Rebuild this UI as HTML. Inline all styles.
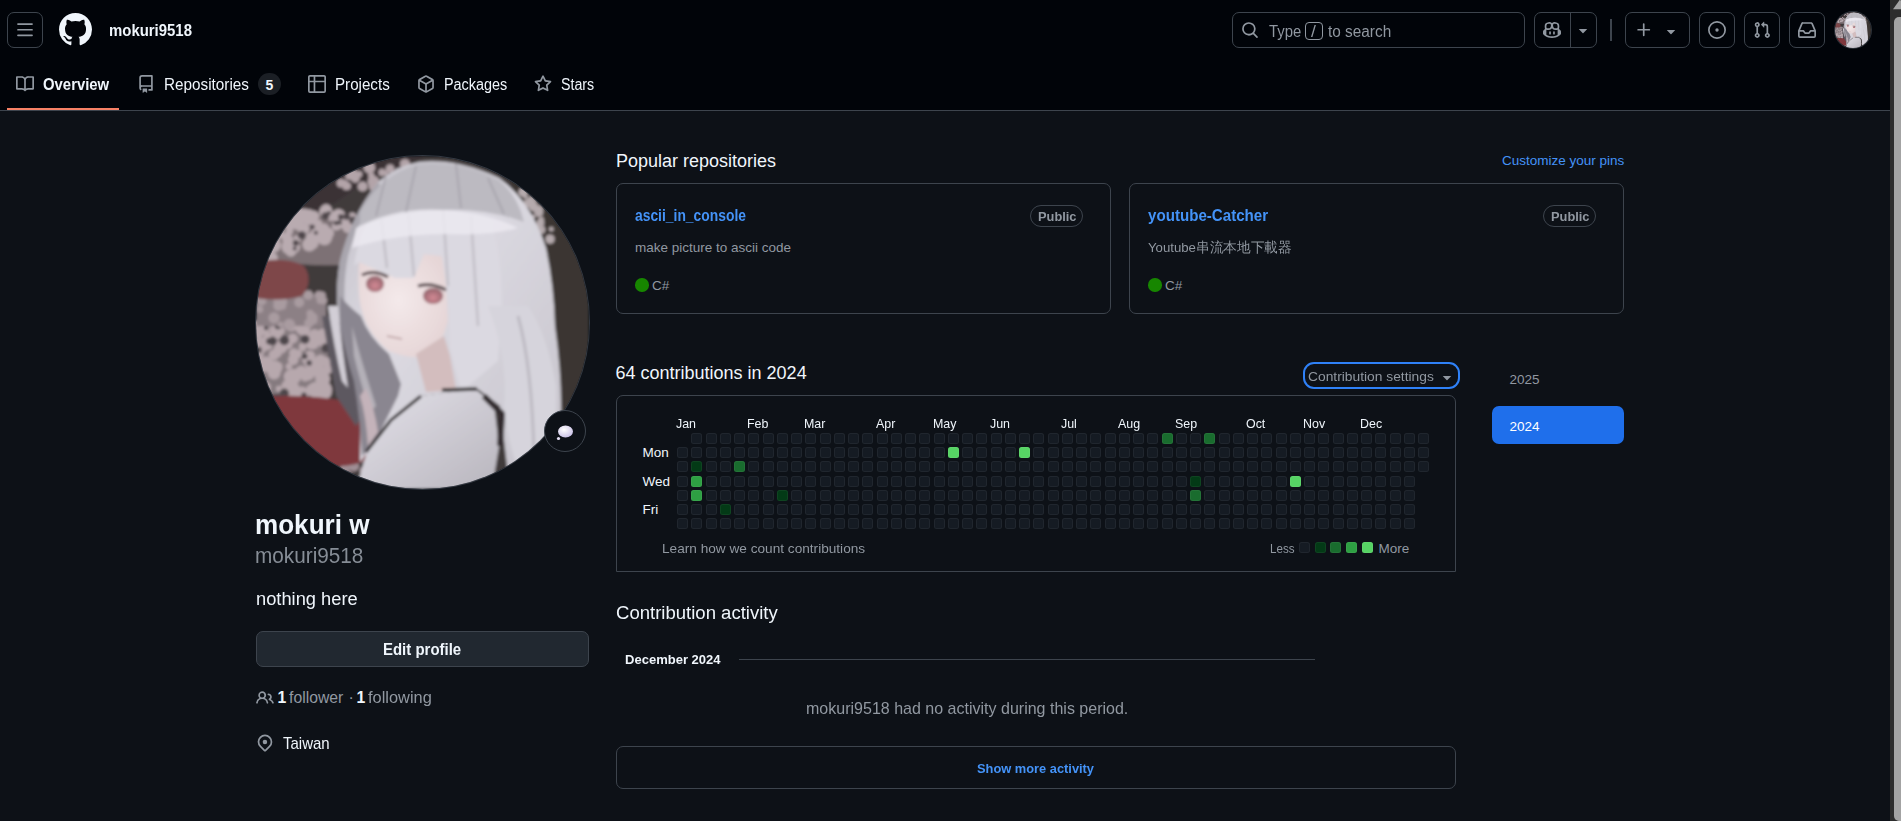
<!DOCTYPE html><html><head><meta charset="utf-8"><title>mokuri9518</title><style>
html,body{margin:0;padding:0;width:1901px;height:821px;overflow:hidden;background:#0d1117;font-family:"Liberation Sans",sans-serif;color:#f0f6fc;}
body{position:relative;}
.a{position:absolute;box-sizing:border-box;}
.t{position:absolute;white-space:nowrap;}
svg.a{display:block;}
</style></head><body>
<div class="a" style="left:0px;top:0px;width:1890px;height:110px;background:#010409;"></div>
<div class="a" style="left:0px;top:110px;width:1890px;height:1px;background:#3d444d;"></div>
<div class="a" style="left:7px;top:12px;width:36px;height:36px;border:1px solid #3d444d;border-radius:7px;"></div>
<svg class="a" style="left:16px;top:21px" width="18" height="18" viewBox="0 0 16 16" fill="#9198a1"><path d="M1 2.75A.75.75 0 0 1 1.75 2h12.5a.75.75 0 0 1 0 1.5H1.75A.75.75 0 0 1 1 2.75Zm0 5A.75.75 0 0 1 1.75 7h12.5a.75.75 0 0 1 0 1.5H1.75A.75.75 0 0 1 1 7.75ZM1.75 12h12.5a.75.75 0 0 1 0 1.5H1.75a.75.75 0 0 1 0-1.5Z"/></svg>
<svg class="a" style="left:58.5px;top:13px" width="33" height="33" viewBox="0 0 16 16" fill="#f0f6fc"><path d="M8 0c4.42 0 8 3.58 8 8a8.013 8.013 0 0 1-5.45 7.59c-.4.08-.55-.17-.55-.38 0-.27.01-1.13.01-2.2 0-.75-.25-1.230-.54-1.48 1.78-.2 3.65-.88 3.65-3.95 0-.88-.31-1.59-.82-2.150.08-.2.36-1.02-.08-2.12 0 0-.67-.22-2.2.82-.64-.18-1.32-.27-2-.27-.68 0-1.36.09-2 .27-1.53-1.030-2.2-.82-2.2-.82-.44 1.1-.16 1.92-.08 2.12-.51.56-.82 1.28-.82 2.15 0 3.06 1.86 3.75 3.64 3.95-.23.2-.44.55-.51 1.07-.46.21-1.61.55-2.33-.66-.15-.24-.6-.83-1.23-.82-.67.01-.27.38.01.53.34.19.73.9.82 1.13.16.45.68 1.31 2.69.94 0 .67.01 1.3.01 1.49 0 .21-.15.45-.55.38A7.995 7.995 0 0 1 0 8c0-4.42 3.58-8 8-8Z"/></svg>
<div class="t" id="hdr_user" style="left:109px;top:22.76px;font-size:16px;line-height:16px;color:#f0f6fc;font-weight:700;transform:scaleX(0.933);transform-origin:0 0;">mokuri9518</div>
<div class="a" style="left:1232px;top:12px;width:293px;height:36px;border:1px solid #3d444d;border-radius:7px;"></div>
<svg class="a" style="left:1241px;top:21px" width="18" height="18" viewBox="0 0 16 16" fill="#9198a1"><path d="M10.68 11.74a6 6 0 0 1-7.922-8.982 6 6 0 0 1 8.982 7.922l3.04 3.04a.749.749 0 0 1-.326 1.275.749.749 0 0 1-.734-.215ZM11.5 7a4.499 4.499 0 1 0-8.997 0A4.499 4.499 0 0 0 11.5 7Z"/></svg>
<div class="t" id="s_type" style="left:1268.5px;top:23.66px;font-size:16px;line-height:16px;color:#9198a1;font-weight:400;transform:scaleX(0.93);transform-origin:0 0;">Type</div>
<div class="a" style="left:1305px;top:22px;width:18px;height:18px;border:1px solid #9198a1;border-radius:4px;"></div>
<div class="t" style="left:1310.5px;top:23.96px;font-size:16px;line-height:16px;color:#9198a1;font-weight:400;transform:scaleX(1.1);transform-origin:0 0;">/</div>
<div class="t" id="s_to" style="left:1328px;top:23.66px;font-size:16px;line-height:16px;color:#9198a1;font-weight:400;transform:scaleX(0.96);transform-origin:0 0;">to search</div>
<div class="a" style="left:1534px;top:12px;width:63px;height:36px;border:1px solid #3d444d;border-radius:7px;"></div>
<div class="a" style="left:1570px;top:12px;width:1px;height:36px;background:#3d444d;"></div>
<svg class="a" style="left:1543px;top:21px" width="18" height="18" viewBox="0 0 16 16" fill="#9198a1"><path d="M7.998 15.035c-4.562 0-7.873-2.914-7.998-3.749V9.338c.085-.628.677-1.686 1.588-2.065.013-.07.024-.143.036-.218.029-.183.06-.384.126-.612-.201-.508-.254-1.084-.254-1.656 0-.87.128-1.769.693-2.484.579-.733 1.494-1.124 2.724-1.261 1.206-.134 2.262.034 2.944.765.05.053.096.108.139.165.044-.057.094-.112.143-.165.682-.731 1.738-.899 2.944-.765 1.23.137 2.145.528 2.724 1.261.566.715.693 1.614.693 2.484 0 .572-.053 1.148-.254 1.656.066.228.098.429.126.612.012.076.024.148.037.218.924.385 1.522 1.471 1.591 2.095v1.872c0 .766-3.351 3.795-8.002 3.795Zm0-1.485c2.28 0 4.584-1.11 5.002-1.433V7.862l-.023-.116c-.49.21-1.075.291-1.727.291-1.146 0-2.059-.327-2.71-.991A3.222 3.222 0 0 1 8 6.303a3.24 3.24 0 0 1-.544.743c-.65.664-1.563.991-2.71.991-.652 0-1.236-.081-1.727-.291l-.023.116v4.255c.419.323 2.722 1.433 5.002 1.433ZM6.762 2.83c-.193-.206-.637-.413-1.682-.297-1.019.113-1.479.404-1.713.7-.247.312-.369.789-.369 1.554 0 .793.129 1.171.308 1.371.162.181.519.379 1.442.379.853 0 1.339-.235 1.638-.54.315-.322.527-.827.617-1.553.117-.935-.037-1.395-.241-1.614Zm4.155-.297c-1.044-.116-1.488.091-1.681.297-.204.219-.359.679-.242 1.614.091.726.303 1.231.618 1.553.299.305.784.54 1.638.54.922 0 1.28-.198 1.442-.379.179-.2.308-.578.308-1.371 0-.765-.123-1.242-.37-1.554-.233-.296-.693-.587-1.713-.7ZM6.25 9.037a.75.75 0 0 1 .75.75v1.501a.75.75 0 0 1-1.5 0V9.787a.75.75 0 0 1 .75-.75Zm4.25.75v1.501a.75.75 0 0 1-1.5 0V9.787a.75.75 0 0 1 1.5 0Z"/></svg>
<svg class="a" style="left:1574px;top:21px" width="18" height="18" viewBox="0 0 16 16" fill="#9198a1"><path d="m4.427 7.427 3.396 3.396a.25.25 0 0 0 .354 0l3.396-3.396A.25.25 0 0 0 11.396 7H4.604a.25.25 0 0 0-.177.427Z"/></svg>
<div class="a" style="left:1610px;top:19px;width:2px;height:22px;background:#3d444d;"></div>
<div class="a" style="left:1625px;top:12px;width:65px;height:36px;border:1px solid #3d444d;border-radius:7px;"></div>
<svg class="a" style="left:1635px;top:21px" width="18" height="18" viewBox="0 0 16 16" fill="#9198a1"><path d="M7.75 2a.75.75 0 0 1 .75.75V7h4.25a.75.75 0 0 1 0 1.5H8.5v4.25a.75.75 0 0 1-1.5 0V8.5H2.75a.75.75 0 0 1 0-1.5H7V2.75A.75.75 0 0 1 7.75 2Z"/></svg>
<svg class="a" style="left:1662px;top:22px" width="18" height="18" viewBox="0 0 16 16" fill="#9198a1"><path d="m4.427 7.427 3.396 3.396a.25.25 0 0 0 .354 0l3.396-3.396A.25.25 0 0 0 11.396 7H4.604a.25.25 0 0 0-.177.427Z"/></svg>
<div class="a" style="left:1699px;top:12px;width:36px;height:36px;border:1px solid #3d444d;border-radius:7px;"></div>
<svg class="a" style="left:1708px;top:21px" width="18" height="18" viewBox="0 0 16 16" fill="#9198a1"><path d="M8 9.5a1.5 1.5 0 1 0 0-3 1.5 1.5 0 0 0 0 3ZM8 0a8 8 0 1 1 0 16A8 8 0 0 1 8 0ZM1.5 8a6.5 6.5 0 1 0 13 0 6.5 6.5 0 0 0-13 0Z"/></svg>
<div class="a" style="left:1744px;top:12px;width:36px;height:36px;border:1px solid #3d444d;border-radius:7px;"></div>
<svg class="a" style="left:1753px;top:21px" width="18" height="18" viewBox="0 0 16 16" fill="#9198a1"><path d="M1.5 3.25a2.25 2.25 0 1 1 3 2.122v5.256a2.251 2.251 0 1 1-1.5 0V5.372A2.25 2.25 0 0 1 1.5 3.25Zm5.677-.177L9.573.677A.25.25 0 0 1 10 .854V2.5h1A2.5 2.5 0 0 1 13.5 5v5.628a2.251 2.251 0 1 1-1.5 0V5a1 1 0 0 0-1-1h-1v1.646a.25.25 0 0 1-.427.177L7.177 3.427a.25.25 0 0 1 0-.354ZM3.75 2.5a.75.75 0 1 0 0 1.5.75.75 0 0 0 0-1.5Zm0 9.5a.75.75 0 1 0 0 1.5.75.75 0 0 0 0-1.5Zm8.250.75a.75.75 0 1 0 1.5 0 .75.75 0 0 0-1.5 0Z"/></svg>
<div class="a" style="left:1789px;top:12px;width:36px;height:36px;border:1px solid #3d444d;border-radius:7px;"></div>
<svg class="a" style="left:1798px;top:21px" width="18" height="18" viewBox="0 0 16 16" fill="#9198a1"><path d="M2.8 2.06A1.75 1.75 0 0 1 4.41 1h7.18c.7 0 1.333.417 1.61 1.06l2.74 6.395c.04.093.06.194.06.295v4.5A1.75 1.75 0 0 1 14.25 15H1.75A1.75 1.75 0 0 1 0 13.25v-4.5c0-.101.02-.202.06-.295Zm1.61.44a.25.25 0 0 0-.23.152L1.887 8H4.75a.75.75 0 0 1 .6.3L6.625 10h2.75l1.275-1.7a.75.75 0 0 1 .6-.3h2.863L11.820 2.652a.25.25 0 0 0-.23-.152Zm10.09 7h-2.875l-1.275 1.7a.75.75 0 0 1-.6.3h-3.5a.75.75 0 0 1-.6-.3L4.375 9.5H1.5v3.75c0 .138.112.25.25.25h12.5a.25.25 0 0 0 .25-.25Z"/></svg>
<div class="a" style="left:1835px;top:12px;width:36px;height:36px;border-radius:50%;overflow:hidden;box-shadow:0 0 0 1px rgba(61,68,77,0.7);filter:blur(0.35px);"><svg width="36" height="36" viewBox="0 0 333 333" style="display:block">
<defs>
<filter id="s_blr" x="-5%" y="-5%" width="110%" height="110%"><feGaussianBlur stdDeviation="1.5"/></filter>
<linearGradient id="s_hairg" x1="0" y1="0" x2="1" y2="1"><stop offset="0" stop-color="#c2bfc7"/><stop offset="0.4" stop-color="#dcdae2"/><stop offset="1" stop-color="#c6c3cb"/></linearGradient>
<linearGradient id="s_bodyg" x1="0" y1="0" x2="1" y2="1"><stop offset="0" stop-color="#e4e2ea"/><stop offset="1" stop-color="#b8b5bd"/></linearGradient>
<radialGradient id="s_faceg" cx="0.45" cy="0.45" r="0.7"><stop offset="0" stop-color="#f4e9ea"/><stop offset="1" stop-color="#e3d2d3"/></radialGradient>
<radialGradient id="s_eyeg" cx="0.5" cy="0.6" r="0.6"><stop offset="0" stop-color="#d48a95"/><stop offset="1" stop-color="#8e6068"/></radialGradient>
</defs>
<g filter="url(#s_blr)">
<rect x="0" y="0" width="333" height="333" fill="#403a3b"/>
<rect x="255" y="0" width="78" height="333" fill="#3a3431"/>
<path d="M0 0 L170 0 L110 25 L60 60 L0 70 Z" fill="#3a3335"/>
<path d="M15 62 Q50 50 98 62 L96 108 Q60 112 10 104 Z" fill="#7d7175"/><circle cx="39.1" cy="60.4" r="6.3" fill="#b9abb0"/><circle cx="16.5" cy="82.0" r="4.8" fill="#b9abb0"/><circle cx="15.2" cy="80.4" r="3.2" fill="#b9abb0"/><circle cx="49.0" cy="55.9" r="3.5" fill="#b9abb0"/><circle cx="21.1" cy="64.5" r="6.1" fill="#b9abb0"/><circle cx="14.2" cy="100.1" r="4.4" fill="#b9abb0"/><circle cx="23.0" cy="58.6" r="4.5" fill="#b9abb0"/><circle cx="83.5" cy="62.1" r="5.9" fill="#b9abb0"/><circle cx="67.5" cy="72.9" r="5.7" fill="#b9abb0"/><circle cx="15.7" cy="55.3" r="4.0" fill="#b9abb0"/><circle cx="71.2" cy="75.9" r="4.6" fill="#b9abb0"/><circle cx="62.7" cy="77.4" r="4.5" fill="#b9abb0"/><circle cx="32.0" cy="84.2" r="5.6" fill="#b9abb0"/><circle cx="20.6" cy="75.4" r="6.8" fill="#b9abb0"/><circle cx="23.7" cy="79.4" r="3.2" fill="#b9abb0"/><circle cx="38.2" cy="90.9" r="6.0" fill="#b9abb0"/><circle cx="62.2" cy="77.5" r="7.2" fill="#b9abb0"/><circle cx="69.8" cy="55.4" r="6.5" fill="#b9abb0"/><circle cx="84.0" cy="67.9" r="4.9" fill="#b9abb0"/><circle cx="70.2" cy="53.3" r="5.3" fill="#b9abb0"/><circle cx="25.1" cy="58.6" r="3.3" fill="#b9abb0"/><circle cx="79.1" cy="59.2" r="4.2" fill="#b9abb0"/><circle cx="17.3" cy="77.2" r="5.7" fill="#b9abb0"/><circle cx="87.8" cy="67.6" r="5.1" fill="#b9abb0"/><circle cx="96.2" cy="60.5" r="3.9" fill="#b9abb0"/><circle cx="30.9" cy="65.1" r="5.4" fill="#b9abb0"/><circle cx="63.0" cy="66.7" r="3.0" fill="#b9abb0"/><circle cx="47.7" cy="72.7" r="5.8" fill="#b9abb0"/><circle cx="56.4" cy="86.6" r="6.4" fill="#b9abb0"/><circle cx="14.9" cy="102.4" r="6.9" fill="#b9abb0"/><circle cx="45.3" cy="74.3" r="3.5" fill="#b9abb0"/><circle cx="67.1" cy="55.5" r="3.3" fill="#b9abb0"/><circle cx="28.8" cy="61.1" r="4.7" fill="#b9abb0"/><circle cx="14.7" cy="52.0" r="3.8" fill="#b9abb0"/><circle cx="19.1" cy="72.4" r="3.1" fill="#b9abb0"/><circle cx="23.4" cy="66.1" r="4.7" fill="#b9abb0"/><circle cx="42.8" cy="58.9" r="7.2" fill="#b9abb0"/><circle cx="53.5" cy="56.8" r="3.5" fill="#b9abb0"/><circle cx="40.8" cy="66.8" r="7.1" fill="#b9abb0"/><circle cx="24.5" cy="53.3" r="7.8" fill="#b9abb0"/><circle cx="57.5" cy="60.2" r="5.7" fill="#b9abb0"/><circle cx="12.4" cy="81.6" r="7.9" fill="#b9abb0"/><circle cx="33.5" cy="72.5" r="3.8" fill="#b9abb0"/><circle cx="80.1" cy="70.5" r="4.1" fill="#b9abb0"/><circle cx="30.4" cy="81.0" r="4.8" fill="#b9abb0"/><circle cx="12.6" cy="53.6" r="4.4" fill="#b9abb0"/><circle cx="33.3" cy="90.8" r="7.8" fill="#b9abb0"/><circle cx="42.8" cy="64.3" r="4.1" fill="#b9abb0"/><circle cx="27.7" cy="63.4" r="6.1" fill="#b9abb0"/><circle cx="53.2" cy="88.6" r="7.0" fill="#b9abb0"/><circle cx="17.6" cy="89.0" r="7.5" fill="#b9abb0"/><circle cx="53.0" cy="62.0" r="6.9" fill="#b9abb0"/><circle cx="75.2" cy="61.5" r="3.6" fill="#b9abb0"/><circle cx="82.6" cy="60.2" r="7.1" fill="#b9abb0"/><circle cx="41.5" cy="82.7" r="3.7" fill="#b9abb0"/><circle cx="68.5" cy="81.5" r="7.7" fill="#b9abb0"/><circle cx="84.4" cy="63.8" r="4.3" fill="#b9abb0"/><circle cx="36.4" cy="65.5" r="5.9" fill="#b9abb0"/><circle cx="33.3" cy="75.5" r="3.7" fill="#b9abb0"/><circle cx="91.9" cy="71.8" r="5.3" fill="#b9abb0"/><circle cx="55.1" cy="81.8" r="5.6" fill="#b9abb0"/><circle cx="11.7" cy="76.6" r="3.9" fill="#b9abb0"/><circle cx="10.4" cy="96.8" r="3.9" fill="#b9abb0"/><circle cx="60.1" cy="70.3" r="5.6" fill="#b9abb0"/><circle cx="19.5" cy="83.4" r="4.2" fill="#b9abb0"/><circle cx="34.9" cy="95.2" r="5.5" fill="#b9abb0"/><circle cx="65.1" cy="80.3" r="5.6" fill="#b9abb0"/><circle cx="72.3" cy="77.3" r="5.7" fill="#b9abb0"/><circle cx="94.8" cy="66.5" r="5.8" fill="#b9abb0"/><circle cx="22.3" cy="58.8" r="5.2" fill="#b9abb0"/><circle cx="16.5" cy="65.5" r="2.1" fill="#4f474b"/><circle cx="90.7" cy="60.6" r="3.4" fill="#4f474b"/><circle cx="69.4" cy="60.0" r="3.8" fill="#4f474b"/><circle cx="97.1" cy="64.3" r="3.9" fill="#4f474b"/><circle cx="45.8" cy="79.3" r="4.0" fill="#4f474b"/><circle cx="84.9" cy="61.0" r="2.9" fill="#4f474b"/><circle cx="56.4" cy="71.0" r="2.4" fill="#4f474b"/><circle cx="38.7" cy="92.4" r="2.0" fill="#4f474b"/><circle cx="59.9" cy="76.7" r="2.0" fill="#4f474b"/><circle cx="39.8" cy="86.9" r="3.0" fill="#4f474b"/><circle cx="19.4" cy="66.9" r="2.1" fill="#4f474b"/><circle cx="80.1" cy="67.1" r="2.3" fill="#4f474b"/><circle cx="83.7" cy="66.5" r="2.3" fill="#4f474b"/><circle cx="73.0" cy="57.0" r="2.1" fill="#4f474b"/><circle cx="129.4" cy="17.0" r="2.8" fill="#b3a4a9"/><circle cx="145.9" cy="23.9" r="5.3" fill="#b3a4a9"/><circle cx="89.5" cy="31.3" r="2.7" fill="#b3a4a9"/><circle cx="140.9" cy="18.0" r="3.7" fill="#b3a4a9"/><circle cx="120.5" cy="33.6" r="3.4" fill="#b3a4a9"/><circle cx="92.5" cy="20.4" r="3.3" fill="#b3a4a9"/><circle cx="134.1" cy="12.6" r="4.3" fill="#b3a4a9"/><circle cx="85.0" cy="27.2" r="4.4" fill="#b3a4a9"/><circle cx="96.5" cy="18.7" r="5.8" fill="#b3a4a9"/><circle cx="91.0" cy="30.0" r="4.0" fill="#b3a4a9"/><circle cx="116.7" cy="30.5" r="3.9" fill="#b3a4a9"/><circle cx="117.4" cy="25.7" r="5.9" fill="#b3a4a9"/><circle cx="106.6" cy="30.5" r="5.0" fill="#b3a4a9"/><circle cx="126.0" cy="16.4" r="3.7" fill="#b3a4a9"/><circle cx="88.7" cy="27.4" r="3.4" fill="#b3a4a9"/><circle cx="139.5" cy="31.7" r="4.8" fill="#b3a4a9"/><circle cx="103.3" cy="18.2" r="3.1" fill="#b3a4a9"/><circle cx="113.4" cy="11.7" r="5.9" fill="#b3a4a9"/><circle cx="148.2" cy="21.1" r="3.4" fill="#b3a4a9"/><circle cx="147.7" cy="13.2" r="3.7" fill="#b3a4a9"/><circle cx="115.3" cy="19.6" r="3.2" fill="#b3a4a9"/><circle cx="99.4" cy="22.3" r="4.4" fill="#b3a4a9"/><circle cx="133.5" cy="24.7" r="5.0" fill="#b3a4a9"/><circle cx="142.0" cy="15.9" r="3.6" fill="#b3a4a9"/><circle cx="149.0" cy="7.9" r="5.0" fill="#b3a4a9"/><path d="M0 168 L72 168 L72 245 L0 245 Z" fill="#857a7f"/><circle cx="46.3" cy="171.4" r="7.2" fill="#b7a8ad"/><circle cx="64.2" cy="216.3" r="6.7" fill="#b7a8ad"/><circle cx="58.5" cy="178.7" r="5.6" fill="#b7a8ad"/><circle cx="36.3" cy="232.3" r="7.0" fill="#b7a8ad"/><circle cx="59.5" cy="213.0" r="7.5" fill="#b7a8ad"/><circle cx="49.2" cy="221.4" r="4.1" fill="#b7a8ad"/><circle cx="2.2" cy="178.2" r="4.8" fill="#b7a8ad"/><circle cx="7.6" cy="232.4" r="5.8" fill="#b7a8ad"/><circle cx="45.2" cy="216.2" r="6.4" fill="#b7a8ad"/><circle cx="35.2" cy="168.3" r="7.0" fill="#b7a8ad"/><circle cx="53.9" cy="206.7" r="5.7" fill="#b7a8ad"/><circle cx="47.5" cy="173.1" r="6.7" fill="#b7a8ad"/><circle cx="18.2" cy="173.7" r="4.3" fill="#b7a8ad"/><circle cx="52.5" cy="183.8" r="6.7" fill="#b7a8ad"/><circle cx="70.3" cy="206.0" r="4.9" fill="#b7a8ad"/><circle cx="34.5" cy="220.6" r="6.8" fill="#b7a8ad"/><circle cx="44.4" cy="217.5" r="3.4" fill="#b7a8ad"/><circle cx="10.6" cy="187.6" r="6.7" fill="#b7a8ad"/><circle cx="21.9" cy="211.7" r="3.1" fill="#b7a8ad"/><circle cx="4.4" cy="188.7" r="6.4" fill="#b7a8ad"/><circle cx="49.8" cy="220.0" r="4.5" fill="#b7a8ad"/><circle cx="37.2" cy="203.8" r="5.3" fill="#b7a8ad"/><circle cx="8.5" cy="236.8" r="4.0" fill="#b7a8ad"/><circle cx="70.4" cy="240.1" r="3.1" fill="#b7a8ad"/><circle cx="33.0" cy="231.1" r="7.8" fill="#b7a8ad"/><circle cx="32.4" cy="188.7" r="4.0" fill="#b7a8ad"/><circle cx="68.1" cy="184.2" r="5.9" fill="#b7a8ad"/><circle cx="10.2" cy="208.4" r="7.8" fill="#b7a8ad"/><circle cx="9.5" cy="231.2" r="5.5" fill="#b7a8ad"/><circle cx="63.9" cy="222.2" r="4.2" fill="#b7a8ad"/><circle cx="64.6" cy="205.4" r="3.1" fill="#b7a8ad"/><circle cx="0.3" cy="205.9" r="5.3" fill="#b7a8ad"/><circle cx="21.7" cy="178.8" r="4.7" fill="#b7a8ad"/><circle cx="22.8" cy="232.7" r="3.0" fill="#b7a8ad"/><circle cx="54.1" cy="232.6" r="3.6" fill="#b7a8ad"/><circle cx="66.7" cy="222.9" r="7.5" fill="#b7a8ad"/><circle cx="20.9" cy="196.7" r="5.0" fill="#b7a8ad"/><circle cx="71.9" cy="213.4" r="4.8" fill="#b7a8ad"/><circle cx="30.8" cy="189.2" r="3.2" fill="#b7a8ad"/><circle cx="7.3" cy="232.3" r="4.4" fill="#b7a8ad"/><circle cx="67.4" cy="187.2" r="4.3" fill="#b7a8ad"/><circle cx="36.8" cy="182.6" r="4.9" fill="#b7a8ad"/><circle cx="68.8" cy="236.1" r="7.1" fill="#b7a8ad"/><circle cx="45.4" cy="238.3" r="7.7" fill="#b7a8ad"/><circle cx="39.5" cy="223.4" r="3.2" fill="#b7a8ad"/><circle cx="52.7" cy="202.7" r="6.8" fill="#b7a8ad"/><circle cx="46.4" cy="190.0" r="3.2" fill="#b7a8ad"/><circle cx="66.7" cy="177.8" r="5.4" fill="#b7a8ad"/><circle cx="24.7" cy="190.9" r="6.7" fill="#b7a8ad"/><circle cx="70.3" cy="188.0" r="6.3" fill="#b7a8ad"/><circle cx="21.7" cy="210.9" r="5.0" fill="#b7a8ad"/><circle cx="12.0" cy="180.4" r="4.0" fill="#b7a8ad"/><circle cx="65.2" cy="206.3" r="4.1" fill="#b7a8ad"/><circle cx="65.3" cy="244.7" r="5.2" fill="#b7a8ad"/><circle cx="10.1" cy="182.8" r="3.5" fill="#b7a8ad"/><circle cx="24.6" cy="175.0" r="4.2" fill="#b7a8ad"/><circle cx="18.6" cy="211.9" r="7.4" fill="#b7a8ad"/><circle cx="54.0" cy="199.8" r="5.1" fill="#b7a8ad"/><circle cx="37.7" cy="197.0" r="4.7" fill="#b7a8ad"/><circle cx="4.5" cy="189.4" r="7.8" fill="#b7a8ad"/><circle cx="9.1" cy="206.8" r="6.1" fill="#b7a8ad"/><circle cx="62.1" cy="184.6" r="4.4" fill="#b7a8ad"/><circle cx="17.9" cy="198.8" r="5.2" fill="#b7a8ad"/><circle cx="68.7" cy="233.3" r="7.4" fill="#b7a8ad"/><circle cx="1.6" cy="170.5" r="6.5" fill="#b7a8ad"/><circle cx="64.5" cy="204.4" r="5.9" fill="#b7a8ad"/><circle cx="0.0" cy="198.1" r="7.6" fill="#b7a8ad"/><circle cx="59.4" cy="233.9" r="7.9" fill="#b7a8ad"/><circle cx="17.9" cy="176.4" r="3.8" fill="#b7a8ad"/><circle cx="37.6" cy="220.5" r="7.7" fill="#b7a8ad"/><circle cx="52.0" cy="217.8" r="6.8" fill="#b7a8ad"/><circle cx="32.9" cy="210.5" r="3.2" fill="#b7a8ad"/><circle cx="56.3" cy="185.9" r="7.6" fill="#b7a8ad"/><circle cx="46.5" cy="191.4" r="3.6" fill="#b7a8ad"/><circle cx="18.1" cy="217.0" r="6.5" fill="#b7a8ad"/><circle cx="8.1" cy="173.4" r="5.6" fill="#b7a8ad"/><circle cx="42.0" cy="197.9" r="4.1" fill="#b7a8ad"/><circle cx="43.3" cy="168.8" r="4.5" fill="#b7a8ad"/><circle cx="33.2" cy="241.8" r="6.2" fill="#b7a8ad"/><circle cx="63.6" cy="204.6" r="4.2" fill="#b7a8ad"/><circle cx="17.8" cy="242.0" r="4.1" fill="#4d464b"/><circle cx="22.1" cy="169.7" r="3.5" fill="#4d464b"/><circle cx="48.6" cy="200.3" r="2.8" fill="#4d464b"/><circle cx="48.0" cy="239.2" r="2.7" fill="#4d464b"/><circle cx="2.5" cy="194.0" r="3.3" fill="#4d464b"/><circle cx="49.1" cy="183.3" r="4.4" fill="#4d464b"/><circle cx="53.2" cy="206.9" r="2.6" fill="#4d464b"/><circle cx="69.8" cy="192.0" r="4.5" fill="#4d464b"/><circle cx="16.6" cy="185.1" r="4.3" fill="#4d464b"/><circle cx="21.2" cy="241.3" r="3.5" fill="#4d464b"/><circle cx="13.5" cy="185.2" r="3.3" fill="#4d464b"/><circle cx="47.9" cy="241.1" r="2.4" fill="#4d464b"/><circle cx="28.3" cy="184.4" r="4.9" fill="#4d464b"/><circle cx="10.2" cy="172.0" r="2.2" fill="#4d464b"/><circle cx="28.3" cy="237.2" r="4.7" fill="#4d464b"/><circle cx="52.8" cy="244.8" r="4.8" fill="#4d464b"/><path d="M0 138 L70 138 L70 170 L0 170 Z" fill="#8c8085"/><circle cx="23.0" cy="143.9" r="5.8" fill="#a99ba0"/><circle cx="52.2" cy="139.0" r="4.8" fill="#a99ba0"/><circle cx="26.5" cy="150.0" r="3.7" fill="#a99ba0"/><circle cx="11.8" cy="138.1" r="3.5" fill="#a99ba0"/><circle cx="24.6" cy="168.6" r="2.9" fill="#a99ba0"/><circle cx="67.5" cy="144.6" r="3.7" fill="#a99ba0"/><circle cx="57.5" cy="164.3" r="4.0" fill="#a99ba0"/><circle cx="3.4" cy="153.2" r="3.8" fill="#a99ba0"/><circle cx="64.4" cy="144.2" r="3.8" fill="#a99ba0"/><circle cx="62.8" cy="139.0" r="3.9" fill="#a99ba0"/><circle cx="56.8" cy="162.5" r="2.6" fill="#a99ba0"/><circle cx="2.4" cy="140.0" r="5.7" fill="#a99ba0"/><circle cx="18.0" cy="161.9" r="5.6" fill="#a99ba0"/><circle cx="23.7" cy="146.7" r="5.9" fill="#a99ba0"/><circle cx="43.2" cy="146.4" r="5.0" fill="#a99ba0"/><circle cx="22.2" cy="146.8" r="2.5" fill="#a99ba0"/><circle cx="52.9" cy="167.3" r="4.7" fill="#a99ba0"/><circle cx="66.0" cy="138.8" r="3.3" fill="#a99ba0"/><circle cx="33.3" cy="168.6" r="5.8" fill="#a99ba0"/><circle cx="27.1" cy="146.0" r="4.0" fill="#a99ba0"/><circle cx="34.5" cy="167.7" r="3.1" fill="#a99ba0"/><circle cx="56.2" cy="161.6" r="5.4" fill="#a99ba0"/><circle cx="54.1" cy="157.4" r="3.6" fill="#a99ba0"/><circle cx="22.4" cy="149.6" r="5.2" fill="#a99ba0"/><circle cx="5.5" cy="144.3" r="5.1" fill="#a99ba0"/><circle cx="268.9" cy="39.6" r="2.1" fill="#b5aaad"/><circle cx="282.3" cy="54.2" r="4.9" fill="#b5aaad"/><circle cx="269.7" cy="40.7" r="2.3" fill="#b5aaad"/><circle cx="277.7" cy="49.1" r="3.3" fill="#b5aaad"/><circle cx="285.3" cy="73.8" r="4.2" fill="#b5aaad"/><circle cx="295.3" cy="73.2" r="2.4" fill="#b5aaad"/><circle cx="282.9" cy="56.9" r="4.2" fill="#b5aaad"/><circle cx="266.8" cy="49.9" r="2.7" fill="#b5aaad"/><circle cx="283.4" cy="54.3" r="3.2" fill="#b5aaad"/><circle cx="294.0" cy="83.1" r="4.7" fill="#b5aaad"/><circle cx="259.8" cy="52.4" r="2.4" fill="#b5aaad"/><circle cx="277.8" cy="50.6" r="4.3" fill="#b5aaad"/><circle cx="284.2" cy="70.7" r="2.7" fill="#b5aaad"/><circle cx="274.2" cy="43.9" r="2.6" fill="#b5aaad"/><circle cx="271.7" cy="47.4" r="4.4" fill="#b5aaad"/><circle cx="282.2" cy="71.8" r="2.3" fill="#b5aaad"/><circle cx="276.0" cy="51.9" r="2.9" fill="#b5aaad"/><circle cx="282.9" cy="56.0" r="3.2" fill="#b5aaad"/><circle cx="274.0" cy="47.0" r="4.2" fill="#b5aaad"/><circle cx="267.0" cy="36.3" r="4.7" fill="#b5aaad"/><circle cx="278.3" cy="45.1" r="2.0" fill="#b5aaad"/><circle cx="282.3" cy="71.9" r="4.7" fill="#b5aaad"/><circle cx="274.3" cy="64.2" r="2.4" fill="#b5aaad"/><circle cx="267.8" cy="58.7" r="4.5" fill="#b5aaad"/><circle cx="267.6" cy="58.4" r="3.6" fill="#b5aaad"/><circle cx="274.9" cy="42.9" r="2.7" fill="#b5aaad"/><circle cx="284.4" cy="66.8" r="3.9" fill="#b5aaad"/><circle cx="271.5" cy="59.5" r="3.7" fill="#b5aaad"/><circle cx="277.7" cy="60.5" r="2.1" fill="#b5aaad"/><circle cx="285.2" cy="63.4" r="2.7" fill="#b5aaad"/><circle cx="105.8" cy="324.6" r="4.4" fill="#a08f95"/><circle cx="70.8" cy="313.0" r="3.3" fill="#a08f95"/><circle cx="67.7" cy="311.4" r="3.3" fill="#a08f95"/><circle cx="86.5" cy="314.4" r="3.1" fill="#a08f95"/><circle cx="98.2" cy="298.1" r="5.2" fill="#a08f95"/><circle cx="106.7" cy="314.4" r="3.2" fill="#a08f95"/><circle cx="90.2" cy="309.4" r="5.9" fill="#a08f95"/><circle cx="68.2" cy="327.6" r="6.0" fill="#a08f95"/><circle cx="103.9" cy="326.0" r="3.6" fill="#a08f95"/><circle cx="118.9" cy="313.7" r="5.9" fill="#a08f95"/><circle cx="115.0" cy="301.3" r="5.4" fill="#a08f95"/><circle cx="115.8" cy="297.5" r="4.1" fill="#a08f95"/><circle cx="105.4" cy="301.0" r="5.7" fill="#a08f95"/><circle cx="76.5" cy="326.0" r="3.4" fill="#a08f95"/><circle cx="90.1" cy="330.0" r="3.6" fill="#a08f95"/><circle cx="75.8" cy="314.2" r="4.0" fill="#a08f95"/><circle cx="62.2" cy="301.9" r="3.5" fill="#a08f95"/><circle cx="116.2" cy="320.8" r="5.7" fill="#a08f95"/><circle cx="70.1" cy="324.8" r="3.3" fill="#a08f95"/><circle cx="91.8" cy="319.2" r="4.1" fill="#a08f95"/><circle cx="112.4" cy="316.1" r="4.7" fill="#a08f95"/><circle cx="113.0" cy="299.0" r="6.0" fill="#a08f95"/><circle cx="97.8" cy="310.0" r="5.4" fill="#a08f95"/><circle cx="75.9" cy="332.6" r="4.7" fill="#a08f95"/><circle cx="81.6" cy="324.1" r="4.3" fill="#a08f95"/>
<path d="M0 106 Q30 100 48 110 Q58 125 46 140 Q25 146 0 142 Z" fill="#7e464a"/>
<path d="M0 242 Q40 236 95 246 L118 300 Q90 318 50 304 L20 280 Z" fill="#7f383d"/>
<path d="M66 160 L98 160 L112 250 L100 270 L80 240 Z" fill="#5d5860"/>
<!-- back hair -->
<path d="M163 6 Q200 2 243 22 Q275 45 290 92 Q298 130 299 170 Q306 220 305 262 Q300 292 288 310 L252 318 L244 250 L222 233 L165 240 L118 288 L104 306 Q104 280 106 240 Q98 200 84 168 Q78 140 84 105 Q95 60 122 26 Q140 10 163 6 Z" fill="url(#s_hairg)"/>
<path d="M122 26 Q95 60 84 105 Q78 140 84 168 L90 168 Q86 130 92 100 Q102 62 126 32 Z" fill="#a9a6ae"/>
<!-- lower-left gray strands -->
<path d="M84 140 Q92 150 105 160 Q112 180 133 198 L145 228 L142 240 L118 288 L106 300 Q104 260 98 225 Q90 200 84 170 Z" fill="#8a8690"/>
<path d="M96 170 Q104 200 112 225 L120 250 L114 256 Q104 225 98 200 Z" fill="#b4b0b8"/>
<path d="M72 150 Q78 190 86 225 L92 232 Q86 195 82 150 Z" fill="#d2ced6"/>
<path d="M110 232 Q118 250 122 276 L112 290 Q110 260 104 240 Z" fill="#c4b3ba"/>
<!-- face -->
<path d="M103 106 Q101 140 106 155 Q112 178 133 195 Q150 202 162 201 Q178 192 188 178 L192 165 L190 128 L186 100 L168 98 Q150 116 140 122 Q120 112 103 106 Z" fill="url(#s_faceg)"/>
<path d="M160 198 L188 180 L194 200 L200 234 L170 236 Z" fill="#d3bdbe"/>
<path d="M205 175 L226 170 L228 205 L210 215 Z" fill="#8e8389"/>
<!-- bangs -->
<path d="M98 110 Q103 70 128 44 Q168 16 214 36 Q246 58 246 150 L242 205 L205 236 L194 192 L192 130 L186 100 L168 98 L158 122 L140 122 L123 115 L103 106 Z" fill="#dbd9e1"/>
<path d="M150 30 L158 120 M186 35 L192 130 M125 60 L131 112 M215 60 L222 170" stroke="#c2bfc7" stroke-width="2.5"/>
<path d="M104 56 Q125 18 163 8 Q205 4 243 24 Q262 40 268 66 Q230 52 185 54 Q140 56 104 70 Z" fill="#bcbac1"/>
<path d="M100 72 Q140 50 190 54 Q235 58 262 72 Q235 80 190 78 Q140 78 96 92 Z" fill="#ebe9f0" opacity="0.85"/>
<path d="M130 20 L120 60 M160 10 L150 56 M200 8 L205 52 M232 22 L248 58" stroke="#a4a1a9" stroke-width="2" opacity="0.8"/>
<!-- eyes -->
<ellipse cx="119" cy="128" rx="9" ry="8" fill="url(#s_eyeg)"/>
<path d="M106 119 Q118 113 132 121" stroke="#4e3e42" stroke-width="3" fill="none"/>
<ellipse cx="177" cy="140" rx="10" ry="8" fill="url(#s_eyeg)"/>
<path d="M162 130 Q176 126 190 134" stroke="#4e3e42" stroke-width="3" fill="none"/>
<path d="M131 180 L146 183" stroke="#b89a9c" stroke-width="1.5"/>
<!-- body -->
<path d="M100 333 L112 292 L135 264 L165 240 L219 233 L238 248 L243 290 L236 333 Z" fill="url(#s_bodyg)"/>
<path d="M165 240 L135 264 L110 296" stroke="#2a2628" stroke-width="3" fill="none"/>
<path d="M186 234 L221 233" stroke="#2a2628" stroke-width="3.5" fill="none"/>
<path d="M228 240 L246 258 L244 290" stroke="#302b2d" stroke-width="6" fill="none"/>
<!-- right long hair -->
<path d="M232 150 Q252 200 248 250 Q252 292 266 322 L290 310 Q302 280 300 230 Q292 180 272 150 Z" fill="#d6d4dc"/>
<path d="M262 160 Q276 210 278 300" stroke="#bdbac2" stroke-width="3" fill="none"/>
</g>
</svg></div>
<div class="a" style="left:7px;top:108px;width:112px;height:2px;background:#f78166;"></div>
<svg class="a" style="left:16px;top:75px" width="18" height="18" viewBox="0 0 16 16" fill="#9198a1"><path d="M0 1.75A.75.75 0 0 1 .75 1h4.253c1.227 0 2.317.59 3 1.501A3.743 3.743 0 0 1 11.006 1h4.245a.75.75 0 0 1 .75.75v10.5a.75.75 0 0 1-.75.75h-4.507a2.25 2.25 0 0 0-1.591.659l-.622.621a.75.75 0 0 1-1.06 0l-.622-.621A2.25 2.25 0 0 0 5.258 13H.75a.75.75 0 0 1-.75-.75Zm7.251 10.324.004-5.073-.002-2.253A2.25 2.25 0 0 0 5.003 2.5H1.5v9h3.757a3.75 3.75 0 0 1 1.994.574ZM8.755 4.75l-.004 7.322a3.752 3.752 0 0 1 1.992-.572H14.5v-9h-3.495a2.25 2.25 0 0 0-2.25 2.25Z"/></svg>
<div class="t" id="tab_over" style="left:43px;top:77.46px;font-size:16px;line-height:16px;color:#f0f6fc;font-weight:700;transform:scaleX(0.93);transform-origin:0 0;">Overview</div>
<svg class="a" style="left:137px;top:75px" width="18" height="18" viewBox="0 0 16 16" fill="#9198a1"><path d="M2 2.5A2.5 2.5 0 0 1 4.5 0h8.75a.75.75 0 0 1 .75.75v12.5a.75.75 0 0 1-.75.75h-2.5a.75.75 0 0 1 0-1.5h1.75v-2h-8a1 1 0 0 0-.714 1.7.75.75 0 1 1-1.072 1.05A2.495 2.495 0 0 1 2 11.5Zm10.5-1h-8a1 1 0 0 0-1 1v6.708A2.486 2.486 0 0 1 4.5 9h8ZM5 12.25a.25.25 0 0 1 .25-.25h3.5a.25.25 0 0 1 .25.25v3.25a.25.25 0 0 1-.4.2l-1.45-1.087a.249.249 0 0 0-.3 0L5.4 15.7a.25.25 0 0 1-.4-.2Z"/></svg>
<div class="t" id="tab_repo" style="left:164px;top:77.46px;font-size:16px;line-height:16px;color:#f0f6fc;font-weight:400;transform:scaleX(0.955);transform-origin:0 0;">Repositories</div>
<div class="a" style="left:258px;top:73px;width:23px;height:22px;background:#1b1f25;border-radius:11px;"></div>
<div class="t" id="tab_5" style="left:265.5px;top:78.15px;font-size:14px;line-height:14px;color:#f0f6fc;font-weight:700;">5</div>
<svg class="a" style="left:308px;top:75px" width="18" height="18" viewBox="0 0 16 16" fill="#9198a1"><path d="M0 1.75C0 .784.784 0 1.75 0h12.5C15.216 0 16 .784 16 1.75v12.5A1.75 1.75 0 0 1 14.25 16H1.75A1.75 1.75 0 0 1 0 14.25ZM6.5 6.5v8h7.750a.25.25 0 0 0 .25-.25V6.5Zm8-1.5V1.75a.25.25 0 0 0-.25-.25H6.5V5Zm-13 1.5v7.75c0 .138.112.25.25.25H5v-8ZM5 5V1.5H1.75a.25.25 0 0 0-.25.25V5Z"/></svg>
<div class="t" id="tab_proj" style="left:335px;top:77.46px;font-size:16px;line-height:16px;color:#f0f6fc;font-weight:400;transform:scaleX(0.947);transform-origin:0 0;">Projects</div>
<svg class="a" style="left:417px;top:75px" width="18" height="18" viewBox="0 0 16 16" fill="#9198a1"><path d="m8.878.392 5.25 3.045c.54.314.872.89.872 1.514v6.098a1.75 1.75 0 0 1-.872 1.514l-5.25 3.045a1.75 1.75 0 0 1-1.756 0l-5.25-3.045A1.75 1.75 0 0 1 1 11.049V4.951c0-.624.332-1.201.872-1.514L7.122.392a1.75 1.75 0 0 1 1.756 0ZM7.875 1.69l-4.63 2.685L8 7.133l4.755-2.758-4.63-2.685a.248.248 0 0 0-.25 0ZM2.5 5.677v5.372c0 .09.047.171.125.216l4.625 2.683V8.432Zm6.25 8.271 4.625-2.683a.25.25 0 0 0 .125-.216V5.677L8.75 8.432Z"/></svg>
<div class="t" id="tab_pack" style="left:444px;top:77.46px;font-size:16px;line-height:16px;color:#f0f6fc;font-weight:400;transform:scaleX(0.9);transform-origin:0 0;">Packages</div>
<svg class="a" style="left:534px;top:75px" width="18" height="18" viewBox="0 0 16 16" fill="#9198a1"><path d="M8 .25a.75.75 0 0 1 .673.418l1.882 3.815 4.210.612a.75.75 0 0 1 .416 1.279l-3.046 2.970.719 4.192a.751.751 0 0 1-1.088.791L8 12.347l-3.766 1.98a.75.75 0 0 1-1.088-.79l.72-4.194L.818 6.374a.75.75 0 0 1 .416-1.28l4.21-.611L7.327.668A.75.75 0 0 1 8 .25Zm0 2.445L6.615 5.5a.75.75 0 0 1-.564.41l-3.097.45 2.240 2.184a.75.75 0 0 1 .216.664l-.528 3.084 2.769-1.456a.75.75 0 0 1 .698 0l2.770 1.456-.53-3.084a.75.75 0 0 1 .216-.664l2.240-2.183-3.096-.45a.75.75 0 0 1-.564-.41L8 2.694Z"/></svg>
<div class="t" id="tab_stars" style="left:561px;top:77.46px;font-size:16px;line-height:16px;color:#f0f6fc;font-weight:400;transform:scaleX(0.89);transform-origin:0 0;">Stars</div>
<div class="a" style="left:256px;top:156px;width:333px;height:333px;border-radius:50%;overflow:hidden;box-shadow:0 0 0 1px rgba(61,68,77,0.8);"><svg width="333" height="333" viewBox="0 0 333 333" style="display:block">
<defs>
<filter id="blr" x="-5%" y="-5%" width="110%" height="110%"><feGaussianBlur stdDeviation="1.5"/></filter>
<linearGradient id="hairg" x1="0" y1="0" x2="1" y2="1"><stop offset="0" stop-color="#c2bfc7"/><stop offset="0.4" stop-color="#dcdae2"/><stop offset="1" stop-color="#c6c3cb"/></linearGradient>
<linearGradient id="bodyg" x1="0" y1="0" x2="1" y2="1"><stop offset="0" stop-color="#e4e2ea"/><stop offset="1" stop-color="#b8b5bd"/></linearGradient>
<radialGradient id="faceg" cx="0.45" cy="0.45" r="0.7"><stop offset="0" stop-color="#f4e9ea"/><stop offset="1" stop-color="#e3d2d3"/></radialGradient>
<radialGradient id="eyeg" cx="0.5" cy="0.6" r="0.6"><stop offset="0" stop-color="#d48a95"/><stop offset="1" stop-color="#8e6068"/></radialGradient>
</defs>
<g filter="url(#blr)">
<rect x="0" y="0" width="333" height="333" fill="#403a3b"/>
<rect x="255" y="0" width="78" height="333" fill="#3a3431"/>
<path d="M0 0 L170 0 L110 25 L60 60 L0 70 Z" fill="#3a3335"/>
<path d="M15 62 Q50 50 98 62 L96 108 Q60 112 10 104 Z" fill="#7d7175"/><circle cx="39.1" cy="60.4" r="6.3" fill="#b9abb0"/><circle cx="16.5" cy="82.0" r="4.8" fill="#b9abb0"/><circle cx="15.2" cy="80.4" r="3.2" fill="#b9abb0"/><circle cx="49.0" cy="55.9" r="3.5" fill="#b9abb0"/><circle cx="21.1" cy="64.5" r="6.1" fill="#b9abb0"/><circle cx="14.2" cy="100.1" r="4.4" fill="#b9abb0"/><circle cx="23.0" cy="58.6" r="4.5" fill="#b9abb0"/><circle cx="83.5" cy="62.1" r="5.9" fill="#b9abb0"/><circle cx="67.5" cy="72.9" r="5.7" fill="#b9abb0"/><circle cx="15.7" cy="55.3" r="4.0" fill="#b9abb0"/><circle cx="71.2" cy="75.9" r="4.6" fill="#b9abb0"/><circle cx="62.7" cy="77.4" r="4.5" fill="#b9abb0"/><circle cx="32.0" cy="84.2" r="5.6" fill="#b9abb0"/><circle cx="20.6" cy="75.4" r="6.8" fill="#b9abb0"/><circle cx="23.7" cy="79.4" r="3.2" fill="#b9abb0"/><circle cx="38.2" cy="90.9" r="6.0" fill="#b9abb0"/><circle cx="62.2" cy="77.5" r="7.2" fill="#b9abb0"/><circle cx="69.8" cy="55.4" r="6.5" fill="#b9abb0"/><circle cx="84.0" cy="67.9" r="4.9" fill="#b9abb0"/><circle cx="70.2" cy="53.3" r="5.3" fill="#b9abb0"/><circle cx="25.1" cy="58.6" r="3.3" fill="#b9abb0"/><circle cx="79.1" cy="59.2" r="4.2" fill="#b9abb0"/><circle cx="17.3" cy="77.2" r="5.7" fill="#b9abb0"/><circle cx="87.8" cy="67.6" r="5.1" fill="#b9abb0"/><circle cx="96.2" cy="60.5" r="3.9" fill="#b9abb0"/><circle cx="30.9" cy="65.1" r="5.4" fill="#b9abb0"/><circle cx="63.0" cy="66.7" r="3.0" fill="#b9abb0"/><circle cx="47.7" cy="72.7" r="5.8" fill="#b9abb0"/><circle cx="56.4" cy="86.6" r="6.4" fill="#b9abb0"/><circle cx="14.9" cy="102.4" r="6.9" fill="#b9abb0"/><circle cx="45.3" cy="74.3" r="3.5" fill="#b9abb0"/><circle cx="67.1" cy="55.5" r="3.3" fill="#b9abb0"/><circle cx="28.8" cy="61.1" r="4.7" fill="#b9abb0"/><circle cx="14.7" cy="52.0" r="3.8" fill="#b9abb0"/><circle cx="19.1" cy="72.4" r="3.1" fill="#b9abb0"/><circle cx="23.4" cy="66.1" r="4.7" fill="#b9abb0"/><circle cx="42.8" cy="58.9" r="7.2" fill="#b9abb0"/><circle cx="53.5" cy="56.8" r="3.5" fill="#b9abb0"/><circle cx="40.8" cy="66.8" r="7.1" fill="#b9abb0"/><circle cx="24.5" cy="53.3" r="7.8" fill="#b9abb0"/><circle cx="57.5" cy="60.2" r="5.7" fill="#b9abb0"/><circle cx="12.4" cy="81.6" r="7.9" fill="#b9abb0"/><circle cx="33.5" cy="72.5" r="3.8" fill="#b9abb0"/><circle cx="80.1" cy="70.5" r="4.1" fill="#b9abb0"/><circle cx="30.4" cy="81.0" r="4.8" fill="#b9abb0"/><circle cx="12.6" cy="53.6" r="4.4" fill="#b9abb0"/><circle cx="33.3" cy="90.8" r="7.8" fill="#b9abb0"/><circle cx="42.8" cy="64.3" r="4.1" fill="#b9abb0"/><circle cx="27.7" cy="63.4" r="6.1" fill="#b9abb0"/><circle cx="53.2" cy="88.6" r="7.0" fill="#b9abb0"/><circle cx="17.6" cy="89.0" r="7.5" fill="#b9abb0"/><circle cx="53.0" cy="62.0" r="6.9" fill="#b9abb0"/><circle cx="75.2" cy="61.5" r="3.6" fill="#b9abb0"/><circle cx="82.6" cy="60.2" r="7.1" fill="#b9abb0"/><circle cx="41.5" cy="82.7" r="3.7" fill="#b9abb0"/><circle cx="68.5" cy="81.5" r="7.7" fill="#b9abb0"/><circle cx="84.4" cy="63.8" r="4.3" fill="#b9abb0"/><circle cx="36.4" cy="65.5" r="5.9" fill="#b9abb0"/><circle cx="33.3" cy="75.5" r="3.7" fill="#b9abb0"/><circle cx="91.9" cy="71.8" r="5.3" fill="#b9abb0"/><circle cx="55.1" cy="81.8" r="5.6" fill="#b9abb0"/><circle cx="11.7" cy="76.6" r="3.9" fill="#b9abb0"/><circle cx="10.4" cy="96.8" r="3.9" fill="#b9abb0"/><circle cx="60.1" cy="70.3" r="5.6" fill="#b9abb0"/><circle cx="19.5" cy="83.4" r="4.2" fill="#b9abb0"/><circle cx="34.9" cy="95.2" r="5.5" fill="#b9abb0"/><circle cx="65.1" cy="80.3" r="5.6" fill="#b9abb0"/><circle cx="72.3" cy="77.3" r="5.7" fill="#b9abb0"/><circle cx="94.8" cy="66.5" r="5.8" fill="#b9abb0"/><circle cx="22.3" cy="58.8" r="5.2" fill="#b9abb0"/><circle cx="16.5" cy="65.5" r="2.1" fill="#4f474b"/><circle cx="90.7" cy="60.6" r="3.4" fill="#4f474b"/><circle cx="69.4" cy="60.0" r="3.8" fill="#4f474b"/><circle cx="97.1" cy="64.3" r="3.9" fill="#4f474b"/><circle cx="45.8" cy="79.3" r="4.0" fill="#4f474b"/><circle cx="84.9" cy="61.0" r="2.9" fill="#4f474b"/><circle cx="56.4" cy="71.0" r="2.4" fill="#4f474b"/><circle cx="38.7" cy="92.4" r="2.0" fill="#4f474b"/><circle cx="59.9" cy="76.7" r="2.0" fill="#4f474b"/><circle cx="39.8" cy="86.9" r="3.0" fill="#4f474b"/><circle cx="19.4" cy="66.9" r="2.1" fill="#4f474b"/><circle cx="80.1" cy="67.1" r="2.3" fill="#4f474b"/><circle cx="83.7" cy="66.5" r="2.3" fill="#4f474b"/><circle cx="73.0" cy="57.0" r="2.1" fill="#4f474b"/><circle cx="129.4" cy="17.0" r="2.8" fill="#b3a4a9"/><circle cx="145.9" cy="23.9" r="5.3" fill="#b3a4a9"/><circle cx="89.5" cy="31.3" r="2.7" fill="#b3a4a9"/><circle cx="140.9" cy="18.0" r="3.7" fill="#b3a4a9"/><circle cx="120.5" cy="33.6" r="3.4" fill="#b3a4a9"/><circle cx="92.5" cy="20.4" r="3.3" fill="#b3a4a9"/><circle cx="134.1" cy="12.6" r="4.3" fill="#b3a4a9"/><circle cx="85.0" cy="27.2" r="4.4" fill="#b3a4a9"/><circle cx="96.5" cy="18.7" r="5.8" fill="#b3a4a9"/><circle cx="91.0" cy="30.0" r="4.0" fill="#b3a4a9"/><circle cx="116.7" cy="30.5" r="3.9" fill="#b3a4a9"/><circle cx="117.4" cy="25.7" r="5.9" fill="#b3a4a9"/><circle cx="106.6" cy="30.5" r="5.0" fill="#b3a4a9"/><circle cx="126.0" cy="16.4" r="3.7" fill="#b3a4a9"/><circle cx="88.7" cy="27.4" r="3.4" fill="#b3a4a9"/><circle cx="139.5" cy="31.7" r="4.8" fill="#b3a4a9"/><circle cx="103.3" cy="18.2" r="3.1" fill="#b3a4a9"/><circle cx="113.4" cy="11.7" r="5.9" fill="#b3a4a9"/><circle cx="148.2" cy="21.1" r="3.4" fill="#b3a4a9"/><circle cx="147.7" cy="13.2" r="3.7" fill="#b3a4a9"/><circle cx="115.3" cy="19.6" r="3.2" fill="#b3a4a9"/><circle cx="99.4" cy="22.3" r="4.4" fill="#b3a4a9"/><circle cx="133.5" cy="24.7" r="5.0" fill="#b3a4a9"/><circle cx="142.0" cy="15.9" r="3.6" fill="#b3a4a9"/><circle cx="149.0" cy="7.9" r="5.0" fill="#b3a4a9"/><path d="M0 168 L72 168 L72 245 L0 245 Z" fill="#857a7f"/><circle cx="46.3" cy="171.4" r="7.2" fill="#b7a8ad"/><circle cx="64.2" cy="216.3" r="6.7" fill="#b7a8ad"/><circle cx="58.5" cy="178.7" r="5.6" fill="#b7a8ad"/><circle cx="36.3" cy="232.3" r="7.0" fill="#b7a8ad"/><circle cx="59.5" cy="213.0" r="7.5" fill="#b7a8ad"/><circle cx="49.2" cy="221.4" r="4.1" fill="#b7a8ad"/><circle cx="2.2" cy="178.2" r="4.8" fill="#b7a8ad"/><circle cx="7.6" cy="232.4" r="5.8" fill="#b7a8ad"/><circle cx="45.2" cy="216.2" r="6.4" fill="#b7a8ad"/><circle cx="35.2" cy="168.3" r="7.0" fill="#b7a8ad"/><circle cx="53.9" cy="206.7" r="5.7" fill="#b7a8ad"/><circle cx="47.5" cy="173.1" r="6.7" fill="#b7a8ad"/><circle cx="18.2" cy="173.7" r="4.3" fill="#b7a8ad"/><circle cx="52.5" cy="183.8" r="6.7" fill="#b7a8ad"/><circle cx="70.3" cy="206.0" r="4.9" fill="#b7a8ad"/><circle cx="34.5" cy="220.6" r="6.8" fill="#b7a8ad"/><circle cx="44.4" cy="217.5" r="3.4" fill="#b7a8ad"/><circle cx="10.6" cy="187.6" r="6.7" fill="#b7a8ad"/><circle cx="21.9" cy="211.7" r="3.1" fill="#b7a8ad"/><circle cx="4.4" cy="188.7" r="6.4" fill="#b7a8ad"/><circle cx="49.8" cy="220.0" r="4.5" fill="#b7a8ad"/><circle cx="37.2" cy="203.8" r="5.3" fill="#b7a8ad"/><circle cx="8.5" cy="236.8" r="4.0" fill="#b7a8ad"/><circle cx="70.4" cy="240.1" r="3.1" fill="#b7a8ad"/><circle cx="33.0" cy="231.1" r="7.8" fill="#b7a8ad"/><circle cx="32.4" cy="188.7" r="4.0" fill="#b7a8ad"/><circle cx="68.1" cy="184.2" r="5.9" fill="#b7a8ad"/><circle cx="10.2" cy="208.4" r="7.8" fill="#b7a8ad"/><circle cx="9.5" cy="231.2" r="5.5" fill="#b7a8ad"/><circle cx="63.9" cy="222.2" r="4.2" fill="#b7a8ad"/><circle cx="64.6" cy="205.4" r="3.1" fill="#b7a8ad"/><circle cx="0.3" cy="205.9" r="5.3" fill="#b7a8ad"/><circle cx="21.7" cy="178.8" r="4.7" fill="#b7a8ad"/><circle cx="22.8" cy="232.7" r="3.0" fill="#b7a8ad"/><circle cx="54.1" cy="232.6" r="3.6" fill="#b7a8ad"/><circle cx="66.7" cy="222.9" r="7.5" fill="#b7a8ad"/><circle cx="20.9" cy="196.7" r="5.0" fill="#b7a8ad"/><circle cx="71.9" cy="213.4" r="4.8" fill="#b7a8ad"/><circle cx="30.8" cy="189.2" r="3.2" fill="#b7a8ad"/><circle cx="7.3" cy="232.3" r="4.4" fill="#b7a8ad"/><circle cx="67.4" cy="187.2" r="4.3" fill="#b7a8ad"/><circle cx="36.8" cy="182.6" r="4.9" fill="#b7a8ad"/><circle cx="68.8" cy="236.1" r="7.1" fill="#b7a8ad"/><circle cx="45.4" cy="238.3" r="7.7" fill="#b7a8ad"/><circle cx="39.5" cy="223.4" r="3.2" fill="#b7a8ad"/><circle cx="52.7" cy="202.7" r="6.8" fill="#b7a8ad"/><circle cx="46.4" cy="190.0" r="3.2" fill="#b7a8ad"/><circle cx="66.7" cy="177.8" r="5.4" fill="#b7a8ad"/><circle cx="24.7" cy="190.9" r="6.7" fill="#b7a8ad"/><circle cx="70.3" cy="188.0" r="6.3" fill="#b7a8ad"/><circle cx="21.7" cy="210.9" r="5.0" fill="#b7a8ad"/><circle cx="12.0" cy="180.4" r="4.0" fill="#b7a8ad"/><circle cx="65.2" cy="206.3" r="4.1" fill="#b7a8ad"/><circle cx="65.3" cy="244.7" r="5.2" fill="#b7a8ad"/><circle cx="10.1" cy="182.8" r="3.5" fill="#b7a8ad"/><circle cx="24.6" cy="175.0" r="4.2" fill="#b7a8ad"/><circle cx="18.6" cy="211.9" r="7.4" fill="#b7a8ad"/><circle cx="54.0" cy="199.8" r="5.1" fill="#b7a8ad"/><circle cx="37.7" cy="197.0" r="4.7" fill="#b7a8ad"/><circle cx="4.5" cy="189.4" r="7.8" fill="#b7a8ad"/><circle cx="9.1" cy="206.8" r="6.1" fill="#b7a8ad"/><circle cx="62.1" cy="184.6" r="4.4" fill="#b7a8ad"/><circle cx="17.9" cy="198.8" r="5.2" fill="#b7a8ad"/><circle cx="68.7" cy="233.3" r="7.4" fill="#b7a8ad"/><circle cx="1.6" cy="170.5" r="6.5" fill="#b7a8ad"/><circle cx="64.5" cy="204.4" r="5.9" fill="#b7a8ad"/><circle cx="0.0" cy="198.1" r="7.6" fill="#b7a8ad"/><circle cx="59.4" cy="233.9" r="7.9" fill="#b7a8ad"/><circle cx="17.9" cy="176.4" r="3.8" fill="#b7a8ad"/><circle cx="37.6" cy="220.5" r="7.7" fill="#b7a8ad"/><circle cx="52.0" cy="217.8" r="6.8" fill="#b7a8ad"/><circle cx="32.9" cy="210.5" r="3.2" fill="#b7a8ad"/><circle cx="56.3" cy="185.9" r="7.6" fill="#b7a8ad"/><circle cx="46.5" cy="191.4" r="3.6" fill="#b7a8ad"/><circle cx="18.1" cy="217.0" r="6.5" fill="#b7a8ad"/><circle cx="8.1" cy="173.4" r="5.6" fill="#b7a8ad"/><circle cx="42.0" cy="197.9" r="4.1" fill="#b7a8ad"/><circle cx="43.3" cy="168.8" r="4.5" fill="#b7a8ad"/><circle cx="33.2" cy="241.8" r="6.2" fill="#b7a8ad"/><circle cx="63.6" cy="204.6" r="4.2" fill="#b7a8ad"/><circle cx="17.8" cy="242.0" r="4.1" fill="#4d464b"/><circle cx="22.1" cy="169.7" r="3.5" fill="#4d464b"/><circle cx="48.6" cy="200.3" r="2.8" fill="#4d464b"/><circle cx="48.0" cy="239.2" r="2.7" fill="#4d464b"/><circle cx="2.5" cy="194.0" r="3.3" fill="#4d464b"/><circle cx="49.1" cy="183.3" r="4.4" fill="#4d464b"/><circle cx="53.2" cy="206.9" r="2.6" fill="#4d464b"/><circle cx="69.8" cy="192.0" r="4.5" fill="#4d464b"/><circle cx="16.6" cy="185.1" r="4.3" fill="#4d464b"/><circle cx="21.2" cy="241.3" r="3.5" fill="#4d464b"/><circle cx="13.5" cy="185.2" r="3.3" fill="#4d464b"/><circle cx="47.9" cy="241.1" r="2.4" fill="#4d464b"/><circle cx="28.3" cy="184.4" r="4.9" fill="#4d464b"/><circle cx="10.2" cy="172.0" r="2.2" fill="#4d464b"/><circle cx="28.3" cy="237.2" r="4.7" fill="#4d464b"/><circle cx="52.8" cy="244.8" r="4.8" fill="#4d464b"/><path d="M0 138 L70 138 L70 170 L0 170 Z" fill="#8c8085"/><circle cx="23.0" cy="143.9" r="5.8" fill="#a99ba0"/><circle cx="52.2" cy="139.0" r="4.8" fill="#a99ba0"/><circle cx="26.5" cy="150.0" r="3.7" fill="#a99ba0"/><circle cx="11.8" cy="138.1" r="3.5" fill="#a99ba0"/><circle cx="24.6" cy="168.6" r="2.9" fill="#a99ba0"/><circle cx="67.5" cy="144.6" r="3.7" fill="#a99ba0"/><circle cx="57.5" cy="164.3" r="4.0" fill="#a99ba0"/><circle cx="3.4" cy="153.2" r="3.8" fill="#a99ba0"/><circle cx="64.4" cy="144.2" r="3.8" fill="#a99ba0"/><circle cx="62.8" cy="139.0" r="3.9" fill="#a99ba0"/><circle cx="56.8" cy="162.5" r="2.6" fill="#a99ba0"/><circle cx="2.4" cy="140.0" r="5.7" fill="#a99ba0"/><circle cx="18.0" cy="161.9" r="5.6" fill="#a99ba0"/><circle cx="23.7" cy="146.7" r="5.9" fill="#a99ba0"/><circle cx="43.2" cy="146.4" r="5.0" fill="#a99ba0"/><circle cx="22.2" cy="146.8" r="2.5" fill="#a99ba0"/><circle cx="52.9" cy="167.3" r="4.7" fill="#a99ba0"/><circle cx="66.0" cy="138.8" r="3.3" fill="#a99ba0"/><circle cx="33.3" cy="168.6" r="5.8" fill="#a99ba0"/><circle cx="27.1" cy="146.0" r="4.0" fill="#a99ba0"/><circle cx="34.5" cy="167.7" r="3.1" fill="#a99ba0"/><circle cx="56.2" cy="161.6" r="5.4" fill="#a99ba0"/><circle cx="54.1" cy="157.4" r="3.6" fill="#a99ba0"/><circle cx="22.4" cy="149.6" r="5.2" fill="#a99ba0"/><circle cx="5.5" cy="144.3" r="5.1" fill="#a99ba0"/><circle cx="268.9" cy="39.6" r="2.1" fill="#b5aaad"/><circle cx="282.3" cy="54.2" r="4.9" fill="#b5aaad"/><circle cx="269.7" cy="40.7" r="2.3" fill="#b5aaad"/><circle cx="277.7" cy="49.1" r="3.3" fill="#b5aaad"/><circle cx="285.3" cy="73.8" r="4.2" fill="#b5aaad"/><circle cx="295.3" cy="73.2" r="2.4" fill="#b5aaad"/><circle cx="282.9" cy="56.9" r="4.2" fill="#b5aaad"/><circle cx="266.8" cy="49.9" r="2.7" fill="#b5aaad"/><circle cx="283.4" cy="54.3" r="3.2" fill="#b5aaad"/><circle cx="294.0" cy="83.1" r="4.7" fill="#b5aaad"/><circle cx="259.8" cy="52.4" r="2.4" fill="#b5aaad"/><circle cx="277.8" cy="50.6" r="4.3" fill="#b5aaad"/><circle cx="284.2" cy="70.7" r="2.7" fill="#b5aaad"/><circle cx="274.2" cy="43.9" r="2.6" fill="#b5aaad"/><circle cx="271.7" cy="47.4" r="4.4" fill="#b5aaad"/><circle cx="282.2" cy="71.8" r="2.3" fill="#b5aaad"/><circle cx="276.0" cy="51.9" r="2.9" fill="#b5aaad"/><circle cx="282.9" cy="56.0" r="3.2" fill="#b5aaad"/><circle cx="274.0" cy="47.0" r="4.2" fill="#b5aaad"/><circle cx="267.0" cy="36.3" r="4.7" fill="#b5aaad"/><circle cx="278.3" cy="45.1" r="2.0" fill="#b5aaad"/><circle cx="282.3" cy="71.9" r="4.7" fill="#b5aaad"/><circle cx="274.3" cy="64.2" r="2.4" fill="#b5aaad"/><circle cx="267.8" cy="58.7" r="4.5" fill="#b5aaad"/><circle cx="267.6" cy="58.4" r="3.6" fill="#b5aaad"/><circle cx="274.9" cy="42.9" r="2.7" fill="#b5aaad"/><circle cx="284.4" cy="66.8" r="3.9" fill="#b5aaad"/><circle cx="271.5" cy="59.5" r="3.7" fill="#b5aaad"/><circle cx="277.7" cy="60.5" r="2.1" fill="#b5aaad"/><circle cx="285.2" cy="63.4" r="2.7" fill="#b5aaad"/><circle cx="105.8" cy="324.6" r="4.4" fill="#a08f95"/><circle cx="70.8" cy="313.0" r="3.3" fill="#a08f95"/><circle cx="67.7" cy="311.4" r="3.3" fill="#a08f95"/><circle cx="86.5" cy="314.4" r="3.1" fill="#a08f95"/><circle cx="98.2" cy="298.1" r="5.2" fill="#a08f95"/><circle cx="106.7" cy="314.4" r="3.2" fill="#a08f95"/><circle cx="90.2" cy="309.4" r="5.9" fill="#a08f95"/><circle cx="68.2" cy="327.6" r="6.0" fill="#a08f95"/><circle cx="103.9" cy="326.0" r="3.6" fill="#a08f95"/><circle cx="118.9" cy="313.7" r="5.9" fill="#a08f95"/><circle cx="115.0" cy="301.3" r="5.4" fill="#a08f95"/><circle cx="115.8" cy="297.5" r="4.1" fill="#a08f95"/><circle cx="105.4" cy="301.0" r="5.7" fill="#a08f95"/><circle cx="76.5" cy="326.0" r="3.4" fill="#a08f95"/><circle cx="90.1" cy="330.0" r="3.6" fill="#a08f95"/><circle cx="75.8" cy="314.2" r="4.0" fill="#a08f95"/><circle cx="62.2" cy="301.9" r="3.5" fill="#a08f95"/><circle cx="116.2" cy="320.8" r="5.7" fill="#a08f95"/><circle cx="70.1" cy="324.8" r="3.3" fill="#a08f95"/><circle cx="91.8" cy="319.2" r="4.1" fill="#a08f95"/><circle cx="112.4" cy="316.1" r="4.7" fill="#a08f95"/><circle cx="113.0" cy="299.0" r="6.0" fill="#a08f95"/><circle cx="97.8" cy="310.0" r="5.4" fill="#a08f95"/><circle cx="75.9" cy="332.6" r="4.7" fill="#a08f95"/><circle cx="81.6" cy="324.1" r="4.3" fill="#a08f95"/>
<path d="M0 106 Q30 100 48 110 Q58 125 46 140 Q25 146 0 142 Z" fill="#7e464a"/>
<path d="M0 242 Q40 236 95 246 L118 300 Q90 318 50 304 L20 280 Z" fill="#7f383d"/>
<path d="M66 160 L98 160 L112 250 L100 270 L80 240 Z" fill="#5d5860"/>
<!-- back hair -->
<path d="M163 6 Q200 2 243 22 Q275 45 290 92 Q298 130 299 170 Q306 220 305 262 Q300 292 288 310 L252 318 L244 250 L222 233 L165 240 L118 288 L104 306 Q104 280 106 240 Q98 200 84 168 Q78 140 84 105 Q95 60 122 26 Q140 10 163 6 Z" fill="url(#hairg)"/>
<path d="M122 26 Q95 60 84 105 Q78 140 84 168 L90 168 Q86 130 92 100 Q102 62 126 32 Z" fill="#a9a6ae"/>
<!-- lower-left gray strands -->
<path d="M84 140 Q92 150 105 160 Q112 180 133 198 L145 228 L142 240 L118 288 L106 300 Q104 260 98 225 Q90 200 84 170 Z" fill="#8a8690"/>
<path d="M96 170 Q104 200 112 225 L120 250 L114 256 Q104 225 98 200 Z" fill="#b4b0b8"/>
<path d="M72 150 Q78 190 86 225 L92 232 Q86 195 82 150 Z" fill="#d2ced6"/>
<path d="M110 232 Q118 250 122 276 L112 290 Q110 260 104 240 Z" fill="#c4b3ba"/>
<!-- face -->
<path d="M103 106 Q101 140 106 155 Q112 178 133 195 Q150 202 162 201 Q178 192 188 178 L192 165 L190 128 L186 100 L168 98 Q150 116 140 122 Q120 112 103 106 Z" fill="url(#faceg)"/>
<path d="M160 198 L188 180 L194 200 L200 234 L170 236 Z" fill="#d3bdbe"/>
<path d="M205 175 L226 170 L228 205 L210 215 Z" fill="#8e8389"/>
<!-- bangs -->
<path d="M98 110 Q103 70 128 44 Q168 16 214 36 Q246 58 246 150 L242 205 L205 236 L194 192 L192 130 L186 100 L168 98 L158 122 L140 122 L123 115 L103 106 Z" fill="#dbd9e1"/>
<path d="M150 30 L158 120 M186 35 L192 130 M125 60 L131 112 M215 60 L222 170" stroke="#c2bfc7" stroke-width="2.5"/>
<path d="M104 56 Q125 18 163 8 Q205 4 243 24 Q262 40 268 66 Q230 52 185 54 Q140 56 104 70 Z" fill="#bcbac1"/>
<path d="M100 72 Q140 50 190 54 Q235 58 262 72 Q235 80 190 78 Q140 78 96 92 Z" fill="#ebe9f0" opacity="0.85"/>
<path d="M130 20 L120 60 M160 10 L150 56 M200 8 L205 52 M232 22 L248 58" stroke="#a4a1a9" stroke-width="2" opacity="0.8"/>
<!-- eyes -->
<ellipse cx="119" cy="128" rx="9" ry="8" fill="url(#eyeg)"/>
<path d="M106 119 Q118 113 132 121" stroke="#4e3e42" stroke-width="3" fill="none"/>
<ellipse cx="177" cy="140" rx="10" ry="8" fill="url(#eyeg)"/>
<path d="M162 130 Q176 126 190 134" stroke="#4e3e42" stroke-width="3" fill="none"/>
<path d="M131 180 L146 183" stroke="#b89a9c" stroke-width="1.5"/>
<!-- body -->
<path d="M100 333 L112 292 L135 264 L165 240 L219 233 L238 248 L243 290 L236 333 Z" fill="url(#bodyg)"/>
<path d="M165 240 L135 264 L110 296" stroke="#2a2628" stroke-width="3" fill="none"/>
<path d="M186 234 L221 233" stroke="#2a2628" stroke-width="3.5" fill="none"/>
<path d="M228 240 L246 258 L244 290" stroke="#302b2d" stroke-width="6" fill="none"/>
<!-- right long hair -->
<path d="M232 150 Q252 200 248 250 Q252 292 266 322 L290 310 Q302 280 300 230 Q292 180 272 150 Z" fill="#d6d4dc"/>
<path d="M262 160 Q276 210 278 300" stroke="#bdbac2" stroke-width="3" fill="none"/>
</g>
</svg></div>
<div class="a" style="left:544px;top:410px;width:42px;height:42px;background:#0d1117;border:1px solid #3d444d;border-radius:50%;"></div>
<svg class="a" style="left:556px;top:423.5px" width="18" height="18" viewBox="0 0 18 18"><defs><radialGradient id="bub" cx="0.4" cy="0.35" r="0.7"><stop offset="0" stop-color="#ffffff"/><stop offset="1" stop-color="#c8bfe6"/></radialGradient></defs><ellipse cx="9.5" cy="7.5" rx="7.5" ry="6" fill="url(#bub)"/><circle cx="2.5" cy="14.5" r="1.6" fill="#e6e0f5"/></svg>
<div class="t" id="name" style="left:255px;top:511.64px;font-size:27px;line-height:27px;color:#f0f6fc;font-weight:700;transform:scaleX(0.966);transform-origin:0 0;">mokuri w</div>
<div class="t" id="login" style="left:255px;top:544.95px;font-size:22.5px;line-height:22.5px;color:#868d96;font-weight:400;transform:scaleX(0.922);transform-origin:0 0;">mokuri9518</div>
<div class="t" id="bio" style="left:256px;top:590.36px;font-size:18px;line-height:18px;color:#f0f6fc;font-weight:400;transform:scaleX(1.016);transform-origin:0 0;">nothing here</div>
<div class="a" style="left:256px;top:631px;width:333px;height:36px;background:#212830;border:1px solid #3d444d;border-radius:7px;"></div>
<div class="t" id="edit" style="left:383px;top:641.67px;font-size:15.75px;line-height:15.75px;color:#f0f6fc;font-weight:700;transform:scaleX(0.95);transform-origin:0 0;">Edit profile</div>
<svg class="a" style="left:256px;top:689px" width="18" height="18" viewBox="0 0 16 16" fill="#9198a1"><path d="M2 5.5a3.5 3.5 0 1 1 5.898 2.549 5.508 5.508 0 0 1 3.034 4.084.75.75 0 1 1-1.482.235 4 4 0 0 0-7.9 0 .75.75 0 0 1-1.482-.236A5.507 5.507 0 0 1 3.102 8.05 3.493 3.493 0 0 1 2 5.5ZM11 4a3.001 3.001 0 0 1 2.220 5.018 5.010 5.010 0 0 1 2.560 3.012.749.749 0 0 1-.885.954.752.752 0 0 1-.549-.514 3.507 3.507 0 0 0-2.522-2.372.75.75 0 0 1-.574-.73v-.352a.75.75 0 0 1 .416-.672A1.5 1.5 0 0 0 11 5.5.75.75 0 0 1 11 4Zm-5.5-.5a2 2 0 1 0-.001 3.999A2 2 0 0 0 5.5 3.5Z"/></svg>
<div class="t" id="f1" style="left:277.5px;top:689.67px;font-size:15.75px;line-height:15.75px;color:#f0f6fc;font-weight:700;">1</div>
<div class="t" id="f2" style="left:289px;top:689.67px;font-size:15.75px;line-height:15.75px;color:#9198a1;font-weight:400;">follower</div>
<div class="t" id="f3" style="left:348.5px;top:689.67px;font-size:15.75px;line-height:15.75px;color:#9198a1;font-weight:400;">·</div>
<div class="t" id="f4" style="left:356.5px;top:689.67px;font-size:15.75px;line-height:15.75px;color:#f0f6fc;font-weight:700;">1</div>
<div class="t" id="f5" style="left:368px;top:689.67px;font-size:15.75px;line-height:15.75px;color:#9198a1;font-weight:400;transform:scaleX(1.04);transform-origin:0 0;">following</div>
<svg class="a" style="left:256px;top:734px" width="18" height="18" viewBox="0 0 16 16" fill="#9198a1"><path d="m12.596 11.596-3.535 3.536a1.5 1.5 0 0 1-2.122 0l-3.535-3.536a6.5 6.5 0 1 1 9.192-9.192 6.5 6.5 0 0 1 0 9.192Zm-1.06-8.132v-.001a5 5 0 1 0-7.072 7.072L8 14.070l3.536-3.534a5 5 0 0 0 0-7.072ZM8 9a2 2 0 1 1-.001-3.999A2 2 0 0 1 8 9Z"/></svg>
<div class="t" id="loc" style="left:282.5px;top:735.67px;font-size:15.75px;line-height:15.75px;color:#f0f6fc;font-weight:400;transform:scaleX(0.953);transform-origin:0 0;">Taiwan</div>
<div class="t" id="pop" style="left:616px;top:151.76px;font-size:18px;line-height:18px;color:#f0f6fc;font-weight:400;">Popular repositories</div>
<div class="t" id="cust" style="left:1502px;top:153.57px;font-size:13.5px;line-height:13.5px;color:#4493f8;font-weight:400;">Customize your pins</div>
<div class="a" style="left:616px;top:183px;width:495px;height:131px;border:1px solid #3d444d;border-radius:7px;"></div>
<div class="t" id="r1_name" style="left:635px;top:207.67px;font-size:15.75px;line-height:15.75px;color:#4493f8;font-weight:700;transform:scaleX(0.88);transform-origin:0 0;">ascii_in_console</div>
<div class="a" style="left:1030px;top:205px;width:53px;height:22px;border:1px solid #3d444d;border-radius:11px;"></div>
<div class="t" id="r1_pub" style="left:1037.5px;top:210.07px;font-size:13.5px;line-height:13.5px;color:#9198a1;font-weight:700;transform:scaleX(0.95);transform-origin:0 0;">Public</div>
<div class="t" id="r1_desc" style="left:635px;top:240.57px;font-size:13.5px;line-height:13.5px;color:#9198a1;font-weight:400;">make picture to ascii code</div>
<div class="a" style="left:635px;top:278px;width:13.5px;height:13.5px;background:#178600;border-radius:50%;"></div>
<div class="t" id="r1_lang" style="left:652px;top:278.57px;font-size:13.5px;line-height:13.5px;color:#9198a1;font-weight:400;">C#</div>
<div class="a" style="left:1129px;top:183px;width:495px;height:131px;border:1px solid #3d444d;border-radius:7px;"></div>
<div class="t" id="r2_name" style="left:1148px;top:207.67px;font-size:15.75px;line-height:15.75px;color:#4493f8;font-weight:700;transform:scaleX(0.96);transform-origin:0 0;">youtube-Catcher</div>
<div class="a" style="left:1543px;top:205px;width:53px;height:22px;border:1px solid #3d444d;border-radius:11px;"></div>
<div class="t" id="r2_pub" style="left:1550.5px;top:210.07px;font-size:13.5px;line-height:13.5px;color:#9198a1;font-weight:700;transform:scaleX(0.95);transform-origin:0 0;">Public</div>
<div class="t" id="r2_desc" style="left:1148px;top:240.57px;font-size:13.5px;line-height:13.5px;color:#9198a1;font-weight:400;transform:scaleX(0.977);transform-origin:0 0;">Youtube串流本地下載器</div>
<div class="a" style="left:1148px;top:278px;width:13.5px;height:13.5px;background:#178600;border-radius:50%;"></div>
<div class="t" id="r2_lang" style="left:1165px;top:278.57px;font-size:13.5px;line-height:13.5px;color:#9198a1;font-weight:400;">C#</div>
<div class="t" id="contrib" style="left:615.5px;top:363.76px;font-size:18px;line-height:18px;color:#f0f6fc;font-weight:400;">64 contributions in 2024</div>
<div class="a" style="left:1303px;top:362px;width:157px;height:27px;border:2px solid #2f81f7;border-radius:11px;"></div>
<div class="t" id="csettings" style="left:1307.5px;top:369.57px;font-size:13.5px;line-height:13.5px;color:#9198a1;font-weight:400;transform:scaleX(1.022);transform-origin:0 0;">Contribution settings</div>
<svg class="a" style="left:1438px;top:368px" width="18" height="18" viewBox="0 0 16 16" fill="#9198a1"><path d="m4.427 7.427 3.396 3.396a.25.25 0 0 0 .354 0l3.396-3.396A.25.25 0 0 0 11.396 7H4.604a.25.25 0 0 0-.177.427Z"/></svg>
<div class="a" style="left:616px;top:395px;width:840px;height:177px;border:1px solid #3d444d;border-radius:7px 7px 0 0;"></div>
<div class="t" style="left:676.1px;top:417.07px;font-size:13.5px;line-height:13.5px;color:#f0f6fc;font-weight:400;transform:scaleX(0.92);transform-origin:0 0;">Jan</div>
<div class="t" style="left:747.4px;top:417.07px;font-size:13.5px;line-height:13.5px;color:#f0f6fc;font-weight:400;transform:scaleX(0.92);transform-origin:0 0;">Feb</div>
<div class="t" style="left:804.4px;top:417.07px;font-size:13.5px;line-height:13.5px;color:#f0f6fc;font-weight:400;transform:scaleX(0.92);transform-origin:0 0;">Mar</div>
<div class="t" style="left:875.6px;top:417.07px;font-size:13.5px;line-height:13.5px;color:#f0f6fc;font-weight:400;transform:scaleX(0.92);transform-origin:0 0;">Apr</div>
<div class="t" style="left:932.6px;top:417.07px;font-size:13.5px;line-height:13.5px;color:#f0f6fc;font-weight:400;transform:scaleX(0.92);transform-origin:0 0;">May</div>
<div class="t" style="left:989.6px;top:417.07px;font-size:13.5px;line-height:13.5px;color:#f0f6fc;font-weight:400;transform:scaleX(0.92);transform-origin:0 0;">Jun</div>
<div class="t" style="left:1060.8px;top:417.07px;font-size:13.5px;line-height:13.5px;color:#f0f6fc;font-weight:400;transform:scaleX(0.92);transform-origin:0 0;">Jul</div>
<div class="t" style="left:1117.8px;top:417.07px;font-size:13.5px;line-height:13.5px;color:#f0f6fc;font-weight:400;transform:scaleX(0.92);transform-origin:0 0;">Aug</div>
<div class="t" style="left:1174.8px;top:417.07px;font-size:13.5px;line-height:13.5px;color:#f0f6fc;font-weight:400;transform:scaleX(0.92);transform-origin:0 0;">Sep</div>
<div class="t" style="left:1246.1px;top:417.07px;font-size:13.5px;line-height:13.5px;color:#f0f6fc;font-weight:400;transform:scaleX(0.92);transform-origin:0 0;">Oct</div>
<div class="t" style="left:1303.1px;top:417.07px;font-size:13.5px;line-height:13.5px;color:#f0f6fc;font-weight:400;transform:scaleX(0.92);transform-origin:0 0;">Nov</div>
<div class="t" style="left:1360.1px;top:417.07px;font-size:13.5px;line-height:13.5px;color:#f0f6fc;font-weight:400;transform:scaleX(0.92);transform-origin:0 0;">Dec</div>
<div class="t" style="left:642.5px;top:445.87px;font-size:13.5px;line-height:13.5px;color:#f0f6fc;font-weight:400;">Mon</div>
<div class="t" style="left:642.5px;top:474.57px;font-size:13.5px;line-height:13.5px;color:#f0f6fc;font-weight:400;">Wed</div>
<div class="t" style="left:642.5px;top:502.57px;font-size:13.5px;line-height:13.5px;color:#f0f6fc;font-weight:400;">Fri</div>
<style>.c{position:absolute;width:11px;height:11px;border-radius:2.5px;box-shadow:inset 0 0 0 1px rgba(255,255,255,0.05);}</style>
<div class="c" style="left:677.10px;top:447.28px;background:#151b23"></div><div class="c" style="left:677.10px;top:461.46px;background:#151b23"></div><div class="c" style="left:677.10px;top:475.64px;background:#151b23"></div><div class="c" style="left:677.10px;top:489.82px;background:#151b23"></div><div class="c" style="left:677.10px;top:504.00px;background:#151b23"></div><div class="c" style="left:677.10px;top:518.18px;background:#151b23"></div><div class="c" style="left:691.35px;top:433.10px;background:#151b23"></div><div class="c" style="left:691.35px;top:447.28px;background:#151b23"></div><div class="c" style="left:691.35px;top:461.46px;background:#033a16"></div><div class="c" style="left:691.35px;top:475.64px;background:#2ea043"></div><div class="c" style="left:691.35px;top:489.82px;background:#2ea043"></div><div class="c" style="left:691.35px;top:504.00px;background:#151b23"></div><div class="c" style="left:691.35px;top:518.18px;background:#151b23"></div><div class="c" style="left:705.60px;top:433.10px;background:#151b23"></div><div class="c" style="left:705.60px;top:447.28px;background:#151b23"></div><div class="c" style="left:705.60px;top:461.46px;background:#151b23"></div><div class="c" style="left:705.60px;top:475.64px;background:#151b23"></div><div class="c" style="left:705.60px;top:489.82px;background:#151b23"></div><div class="c" style="left:705.60px;top:504.00px;background:#151b23"></div><div class="c" style="left:705.60px;top:518.18px;background:#151b23"></div><div class="c" style="left:719.85px;top:433.10px;background:#151b23"></div><div class="c" style="left:719.85px;top:447.28px;background:#151b23"></div><div class="c" style="left:719.85px;top:461.46px;background:#151b23"></div><div class="c" style="left:719.85px;top:475.64px;background:#151b23"></div><div class="c" style="left:719.85px;top:489.82px;background:#151b23"></div><div class="c" style="left:719.85px;top:504.00px;background:#033a16"></div><div class="c" style="left:719.85px;top:518.18px;background:#151b23"></div><div class="c" style="left:734.10px;top:433.10px;background:#151b23"></div><div class="c" style="left:734.10px;top:447.28px;background:#151b23"></div><div class="c" style="left:734.10px;top:461.46px;background:#196c2e"></div><div class="c" style="left:734.10px;top:475.64px;background:#151b23"></div><div class="c" style="left:734.10px;top:489.82px;background:#151b23"></div><div class="c" style="left:734.10px;top:504.00px;background:#151b23"></div><div class="c" style="left:734.10px;top:518.18px;background:#151b23"></div><div class="c" style="left:748.35px;top:433.10px;background:#151b23"></div><div class="c" style="left:748.35px;top:447.28px;background:#151b23"></div><div class="c" style="left:748.35px;top:461.46px;background:#151b23"></div><div class="c" style="left:748.35px;top:475.64px;background:#151b23"></div><div class="c" style="left:748.35px;top:489.82px;background:#151b23"></div><div class="c" style="left:748.35px;top:504.00px;background:#151b23"></div><div class="c" style="left:748.35px;top:518.18px;background:#151b23"></div><div class="c" style="left:762.60px;top:433.10px;background:#151b23"></div><div class="c" style="left:762.60px;top:447.28px;background:#151b23"></div><div class="c" style="left:762.60px;top:461.46px;background:#151b23"></div><div class="c" style="left:762.60px;top:475.64px;background:#151b23"></div><div class="c" style="left:762.60px;top:489.82px;background:#151b23"></div><div class="c" style="left:762.60px;top:504.00px;background:#151b23"></div><div class="c" style="left:762.60px;top:518.18px;background:#151b23"></div><div class="c" style="left:776.85px;top:433.10px;background:#151b23"></div><div class="c" style="left:776.85px;top:447.28px;background:#151b23"></div><div class="c" style="left:776.85px;top:461.46px;background:#151b23"></div><div class="c" style="left:776.85px;top:475.64px;background:#151b23"></div><div class="c" style="left:776.85px;top:489.82px;background:#033a16"></div><div class="c" style="left:776.85px;top:504.00px;background:#151b23"></div><div class="c" style="left:776.85px;top:518.18px;background:#151b23"></div><div class="c" style="left:791.10px;top:433.10px;background:#151b23"></div><div class="c" style="left:791.10px;top:447.28px;background:#151b23"></div><div class="c" style="left:791.10px;top:461.46px;background:#151b23"></div><div class="c" style="left:791.10px;top:475.64px;background:#151b23"></div><div class="c" style="left:791.10px;top:489.82px;background:#151b23"></div><div class="c" style="left:791.10px;top:504.00px;background:#151b23"></div><div class="c" style="left:791.10px;top:518.18px;background:#151b23"></div><div class="c" style="left:805.35px;top:433.10px;background:#151b23"></div><div class="c" style="left:805.35px;top:447.28px;background:#151b23"></div><div class="c" style="left:805.35px;top:461.46px;background:#151b23"></div><div class="c" style="left:805.35px;top:475.64px;background:#151b23"></div><div class="c" style="left:805.35px;top:489.82px;background:#151b23"></div><div class="c" style="left:805.35px;top:504.00px;background:#151b23"></div><div class="c" style="left:805.35px;top:518.18px;background:#151b23"></div><div class="c" style="left:819.60px;top:433.10px;background:#151b23"></div><div class="c" style="left:819.60px;top:447.28px;background:#151b23"></div><div class="c" style="left:819.60px;top:461.46px;background:#151b23"></div><div class="c" style="left:819.60px;top:475.64px;background:#151b23"></div><div class="c" style="left:819.60px;top:489.82px;background:#151b23"></div><div class="c" style="left:819.60px;top:504.00px;background:#151b23"></div><div class="c" style="left:819.60px;top:518.18px;background:#151b23"></div><div class="c" style="left:833.85px;top:433.10px;background:#151b23"></div><div class="c" style="left:833.85px;top:447.28px;background:#151b23"></div><div class="c" style="left:833.85px;top:461.46px;background:#151b23"></div><div class="c" style="left:833.85px;top:475.64px;background:#151b23"></div><div class="c" style="left:833.85px;top:489.82px;background:#151b23"></div><div class="c" style="left:833.85px;top:504.00px;background:#151b23"></div><div class="c" style="left:833.85px;top:518.18px;background:#151b23"></div><div class="c" style="left:848.10px;top:433.10px;background:#151b23"></div><div class="c" style="left:848.10px;top:447.28px;background:#151b23"></div><div class="c" style="left:848.10px;top:461.46px;background:#151b23"></div><div class="c" style="left:848.10px;top:475.64px;background:#151b23"></div><div class="c" style="left:848.10px;top:489.82px;background:#151b23"></div><div class="c" style="left:848.10px;top:504.00px;background:#151b23"></div><div class="c" style="left:848.10px;top:518.18px;background:#151b23"></div><div class="c" style="left:862.35px;top:433.10px;background:#151b23"></div><div class="c" style="left:862.35px;top:447.28px;background:#151b23"></div><div class="c" style="left:862.35px;top:461.46px;background:#151b23"></div><div class="c" style="left:862.35px;top:475.64px;background:#151b23"></div><div class="c" style="left:862.35px;top:489.82px;background:#151b23"></div><div class="c" style="left:862.35px;top:504.00px;background:#151b23"></div><div class="c" style="left:862.35px;top:518.18px;background:#151b23"></div><div class="c" style="left:876.60px;top:433.10px;background:#151b23"></div><div class="c" style="left:876.60px;top:447.28px;background:#151b23"></div><div class="c" style="left:876.60px;top:461.46px;background:#151b23"></div><div class="c" style="left:876.60px;top:475.64px;background:#151b23"></div><div class="c" style="left:876.60px;top:489.82px;background:#151b23"></div><div class="c" style="left:876.60px;top:504.00px;background:#151b23"></div><div class="c" style="left:876.60px;top:518.18px;background:#151b23"></div><div class="c" style="left:890.85px;top:433.10px;background:#151b23"></div><div class="c" style="left:890.85px;top:447.28px;background:#151b23"></div><div class="c" style="left:890.85px;top:461.46px;background:#151b23"></div><div class="c" style="left:890.85px;top:475.64px;background:#151b23"></div><div class="c" style="left:890.85px;top:489.82px;background:#151b23"></div><div class="c" style="left:890.85px;top:504.00px;background:#151b23"></div><div class="c" style="left:890.85px;top:518.18px;background:#151b23"></div><div class="c" style="left:905.10px;top:433.10px;background:#151b23"></div><div class="c" style="left:905.10px;top:447.28px;background:#151b23"></div><div class="c" style="left:905.10px;top:461.46px;background:#151b23"></div><div class="c" style="left:905.10px;top:475.64px;background:#151b23"></div><div class="c" style="left:905.10px;top:489.82px;background:#151b23"></div><div class="c" style="left:905.10px;top:504.00px;background:#151b23"></div><div class="c" style="left:905.10px;top:518.18px;background:#151b23"></div><div class="c" style="left:919.35px;top:433.10px;background:#151b23"></div><div class="c" style="left:919.35px;top:447.28px;background:#151b23"></div><div class="c" style="left:919.35px;top:461.46px;background:#151b23"></div><div class="c" style="left:919.35px;top:475.64px;background:#151b23"></div><div class="c" style="left:919.35px;top:489.82px;background:#151b23"></div><div class="c" style="left:919.35px;top:504.00px;background:#151b23"></div><div class="c" style="left:919.35px;top:518.18px;background:#151b23"></div><div class="c" style="left:933.60px;top:433.10px;background:#151b23"></div><div class="c" style="left:933.60px;top:447.28px;background:#151b23"></div><div class="c" style="left:933.60px;top:461.46px;background:#151b23"></div><div class="c" style="left:933.60px;top:475.64px;background:#151b23"></div><div class="c" style="left:933.60px;top:489.82px;background:#151b23"></div><div class="c" style="left:933.60px;top:504.00px;background:#151b23"></div><div class="c" style="left:933.60px;top:518.18px;background:#151b23"></div><div class="c" style="left:947.85px;top:433.10px;background:#151b23"></div><div class="c" style="left:947.85px;top:447.28px;background:#56d364"></div><div class="c" style="left:947.85px;top:461.46px;background:#151b23"></div><div class="c" style="left:947.85px;top:475.64px;background:#151b23"></div><div class="c" style="left:947.85px;top:489.82px;background:#151b23"></div><div class="c" style="left:947.85px;top:504.00px;background:#151b23"></div><div class="c" style="left:947.85px;top:518.18px;background:#151b23"></div><div class="c" style="left:962.10px;top:433.10px;background:#151b23"></div><div class="c" style="left:962.10px;top:447.28px;background:#151b23"></div><div class="c" style="left:962.10px;top:461.46px;background:#151b23"></div><div class="c" style="left:962.10px;top:475.64px;background:#151b23"></div><div class="c" style="left:962.10px;top:489.82px;background:#151b23"></div><div class="c" style="left:962.10px;top:504.00px;background:#151b23"></div><div class="c" style="left:962.10px;top:518.18px;background:#151b23"></div><div class="c" style="left:976.35px;top:433.10px;background:#151b23"></div><div class="c" style="left:976.35px;top:447.28px;background:#151b23"></div><div class="c" style="left:976.35px;top:461.46px;background:#151b23"></div><div class="c" style="left:976.35px;top:475.64px;background:#151b23"></div><div class="c" style="left:976.35px;top:489.82px;background:#151b23"></div><div class="c" style="left:976.35px;top:504.00px;background:#151b23"></div><div class="c" style="left:976.35px;top:518.18px;background:#151b23"></div><div class="c" style="left:990.60px;top:433.10px;background:#151b23"></div><div class="c" style="left:990.60px;top:447.28px;background:#151b23"></div><div class="c" style="left:990.60px;top:461.46px;background:#151b23"></div><div class="c" style="left:990.60px;top:475.64px;background:#151b23"></div><div class="c" style="left:990.60px;top:489.82px;background:#151b23"></div><div class="c" style="left:990.60px;top:504.00px;background:#151b23"></div><div class="c" style="left:990.60px;top:518.18px;background:#151b23"></div><div class="c" style="left:1004.85px;top:433.10px;background:#151b23"></div><div class="c" style="left:1004.85px;top:447.28px;background:#151b23"></div><div class="c" style="left:1004.85px;top:461.46px;background:#151b23"></div><div class="c" style="left:1004.85px;top:475.64px;background:#151b23"></div><div class="c" style="left:1004.85px;top:489.82px;background:#151b23"></div><div class="c" style="left:1004.85px;top:504.00px;background:#151b23"></div><div class="c" style="left:1004.85px;top:518.18px;background:#151b23"></div><div class="c" style="left:1019.10px;top:433.10px;background:#151b23"></div><div class="c" style="left:1019.10px;top:447.28px;background:#56d364"></div><div class="c" style="left:1019.10px;top:461.46px;background:#151b23"></div><div class="c" style="left:1019.10px;top:475.64px;background:#151b23"></div><div class="c" style="left:1019.10px;top:489.82px;background:#151b23"></div><div class="c" style="left:1019.10px;top:504.00px;background:#151b23"></div><div class="c" style="left:1019.10px;top:518.18px;background:#151b23"></div><div class="c" style="left:1033.35px;top:433.10px;background:#151b23"></div><div class="c" style="left:1033.35px;top:447.28px;background:#151b23"></div><div class="c" style="left:1033.35px;top:461.46px;background:#151b23"></div><div class="c" style="left:1033.35px;top:475.64px;background:#151b23"></div><div class="c" style="left:1033.35px;top:489.82px;background:#151b23"></div><div class="c" style="left:1033.35px;top:504.00px;background:#151b23"></div><div class="c" style="left:1033.35px;top:518.18px;background:#151b23"></div><div class="c" style="left:1047.60px;top:433.10px;background:#151b23"></div><div class="c" style="left:1047.60px;top:447.28px;background:#151b23"></div><div class="c" style="left:1047.60px;top:461.46px;background:#151b23"></div><div class="c" style="left:1047.60px;top:475.64px;background:#151b23"></div><div class="c" style="left:1047.60px;top:489.82px;background:#151b23"></div><div class="c" style="left:1047.60px;top:504.00px;background:#151b23"></div><div class="c" style="left:1047.60px;top:518.18px;background:#151b23"></div><div class="c" style="left:1061.85px;top:433.10px;background:#151b23"></div><div class="c" style="left:1061.85px;top:447.28px;background:#151b23"></div><div class="c" style="left:1061.85px;top:461.46px;background:#151b23"></div><div class="c" style="left:1061.85px;top:475.64px;background:#151b23"></div><div class="c" style="left:1061.85px;top:489.82px;background:#151b23"></div><div class="c" style="left:1061.85px;top:504.00px;background:#151b23"></div><div class="c" style="left:1061.85px;top:518.18px;background:#151b23"></div><div class="c" style="left:1076.10px;top:433.10px;background:#151b23"></div><div class="c" style="left:1076.10px;top:447.28px;background:#151b23"></div><div class="c" style="left:1076.10px;top:461.46px;background:#151b23"></div><div class="c" style="left:1076.10px;top:475.64px;background:#151b23"></div><div class="c" style="left:1076.10px;top:489.82px;background:#151b23"></div><div class="c" style="left:1076.10px;top:504.00px;background:#151b23"></div><div class="c" style="left:1076.10px;top:518.18px;background:#151b23"></div><div class="c" style="left:1090.35px;top:433.10px;background:#151b23"></div><div class="c" style="left:1090.35px;top:447.28px;background:#151b23"></div><div class="c" style="left:1090.35px;top:461.46px;background:#151b23"></div><div class="c" style="left:1090.35px;top:475.64px;background:#151b23"></div><div class="c" style="left:1090.35px;top:489.82px;background:#151b23"></div><div class="c" style="left:1090.35px;top:504.00px;background:#151b23"></div><div class="c" style="left:1090.35px;top:518.18px;background:#151b23"></div><div class="c" style="left:1104.60px;top:433.10px;background:#151b23"></div><div class="c" style="left:1104.60px;top:447.28px;background:#151b23"></div><div class="c" style="left:1104.60px;top:461.46px;background:#151b23"></div><div class="c" style="left:1104.60px;top:475.64px;background:#151b23"></div><div class="c" style="left:1104.60px;top:489.82px;background:#151b23"></div><div class="c" style="left:1104.60px;top:504.00px;background:#151b23"></div><div class="c" style="left:1104.60px;top:518.18px;background:#151b23"></div><div class="c" style="left:1118.85px;top:433.10px;background:#151b23"></div><div class="c" style="left:1118.85px;top:447.28px;background:#151b23"></div><div class="c" style="left:1118.85px;top:461.46px;background:#151b23"></div><div class="c" style="left:1118.85px;top:475.64px;background:#151b23"></div><div class="c" style="left:1118.85px;top:489.82px;background:#151b23"></div><div class="c" style="left:1118.85px;top:504.00px;background:#151b23"></div><div class="c" style="left:1118.85px;top:518.18px;background:#151b23"></div><div class="c" style="left:1133.10px;top:433.10px;background:#151b23"></div><div class="c" style="left:1133.10px;top:447.28px;background:#151b23"></div><div class="c" style="left:1133.10px;top:461.46px;background:#151b23"></div><div class="c" style="left:1133.10px;top:475.64px;background:#151b23"></div><div class="c" style="left:1133.10px;top:489.82px;background:#151b23"></div><div class="c" style="left:1133.10px;top:504.00px;background:#151b23"></div><div class="c" style="left:1133.10px;top:518.18px;background:#151b23"></div><div class="c" style="left:1147.35px;top:433.10px;background:#151b23"></div><div class="c" style="left:1147.35px;top:447.28px;background:#151b23"></div><div class="c" style="left:1147.35px;top:461.46px;background:#151b23"></div><div class="c" style="left:1147.35px;top:475.64px;background:#151b23"></div><div class="c" style="left:1147.35px;top:489.82px;background:#151b23"></div><div class="c" style="left:1147.35px;top:504.00px;background:#151b23"></div><div class="c" style="left:1147.35px;top:518.18px;background:#151b23"></div><div class="c" style="left:1161.60px;top:433.10px;background:#196c2e"></div><div class="c" style="left:1161.60px;top:447.28px;background:#151b23"></div><div class="c" style="left:1161.60px;top:461.46px;background:#151b23"></div><div class="c" style="left:1161.60px;top:475.64px;background:#151b23"></div><div class="c" style="left:1161.60px;top:489.82px;background:#151b23"></div><div class="c" style="left:1161.60px;top:504.00px;background:#151b23"></div><div class="c" style="left:1161.60px;top:518.18px;background:#151b23"></div><div class="c" style="left:1175.85px;top:433.10px;background:#151b23"></div><div class="c" style="left:1175.85px;top:447.28px;background:#151b23"></div><div class="c" style="left:1175.85px;top:461.46px;background:#151b23"></div><div class="c" style="left:1175.85px;top:475.64px;background:#151b23"></div><div class="c" style="left:1175.85px;top:489.82px;background:#151b23"></div><div class="c" style="left:1175.85px;top:504.00px;background:#151b23"></div><div class="c" style="left:1175.85px;top:518.18px;background:#151b23"></div><div class="c" style="left:1190.10px;top:433.10px;background:#151b23"></div><div class="c" style="left:1190.10px;top:447.28px;background:#151b23"></div><div class="c" style="left:1190.10px;top:461.46px;background:#151b23"></div><div class="c" style="left:1190.10px;top:475.64px;background:#033a16"></div><div class="c" style="left:1190.10px;top:489.82px;background:#196c2e"></div><div class="c" style="left:1190.10px;top:504.00px;background:#151b23"></div><div class="c" style="left:1190.10px;top:518.18px;background:#151b23"></div><div class="c" style="left:1204.35px;top:433.10px;background:#196c2e"></div><div class="c" style="left:1204.35px;top:447.28px;background:#151b23"></div><div class="c" style="left:1204.35px;top:461.46px;background:#151b23"></div><div class="c" style="left:1204.35px;top:475.64px;background:#151b23"></div><div class="c" style="left:1204.35px;top:489.82px;background:#151b23"></div><div class="c" style="left:1204.35px;top:504.00px;background:#151b23"></div><div class="c" style="left:1204.35px;top:518.18px;background:#151b23"></div><div class="c" style="left:1218.60px;top:433.10px;background:#151b23"></div><div class="c" style="left:1218.60px;top:447.28px;background:#151b23"></div><div class="c" style="left:1218.60px;top:461.46px;background:#151b23"></div><div class="c" style="left:1218.60px;top:475.64px;background:#151b23"></div><div class="c" style="left:1218.60px;top:489.82px;background:#151b23"></div><div class="c" style="left:1218.60px;top:504.00px;background:#151b23"></div><div class="c" style="left:1218.60px;top:518.18px;background:#151b23"></div><div class="c" style="left:1232.85px;top:433.10px;background:#151b23"></div><div class="c" style="left:1232.85px;top:447.28px;background:#151b23"></div><div class="c" style="left:1232.85px;top:461.46px;background:#151b23"></div><div class="c" style="left:1232.85px;top:475.64px;background:#151b23"></div><div class="c" style="left:1232.85px;top:489.82px;background:#151b23"></div><div class="c" style="left:1232.85px;top:504.00px;background:#151b23"></div><div class="c" style="left:1232.85px;top:518.18px;background:#151b23"></div><div class="c" style="left:1247.10px;top:433.10px;background:#151b23"></div><div class="c" style="left:1247.10px;top:447.28px;background:#151b23"></div><div class="c" style="left:1247.10px;top:461.46px;background:#151b23"></div><div class="c" style="left:1247.10px;top:475.64px;background:#151b23"></div><div class="c" style="left:1247.10px;top:489.82px;background:#151b23"></div><div class="c" style="left:1247.10px;top:504.00px;background:#151b23"></div><div class="c" style="left:1247.10px;top:518.18px;background:#151b23"></div><div class="c" style="left:1261.35px;top:433.10px;background:#151b23"></div><div class="c" style="left:1261.35px;top:447.28px;background:#151b23"></div><div class="c" style="left:1261.35px;top:461.46px;background:#151b23"></div><div class="c" style="left:1261.35px;top:475.64px;background:#151b23"></div><div class="c" style="left:1261.35px;top:489.82px;background:#151b23"></div><div class="c" style="left:1261.35px;top:504.00px;background:#151b23"></div><div class="c" style="left:1261.35px;top:518.18px;background:#151b23"></div><div class="c" style="left:1275.60px;top:433.10px;background:#151b23"></div><div class="c" style="left:1275.60px;top:447.28px;background:#151b23"></div><div class="c" style="left:1275.60px;top:461.46px;background:#151b23"></div><div class="c" style="left:1275.60px;top:475.64px;background:#151b23"></div><div class="c" style="left:1275.60px;top:489.82px;background:#151b23"></div><div class="c" style="left:1275.60px;top:504.00px;background:#151b23"></div><div class="c" style="left:1275.60px;top:518.18px;background:#151b23"></div><div class="c" style="left:1289.85px;top:433.10px;background:#151b23"></div><div class="c" style="left:1289.85px;top:447.28px;background:#151b23"></div><div class="c" style="left:1289.85px;top:461.46px;background:#151b23"></div><div class="c" style="left:1289.85px;top:475.64px;background:#56d364"></div><div class="c" style="left:1289.85px;top:489.82px;background:#151b23"></div><div class="c" style="left:1289.85px;top:504.00px;background:#151b23"></div><div class="c" style="left:1289.85px;top:518.18px;background:#151b23"></div><div class="c" style="left:1304.10px;top:433.10px;background:#151b23"></div><div class="c" style="left:1304.10px;top:447.28px;background:#151b23"></div><div class="c" style="left:1304.10px;top:461.46px;background:#151b23"></div><div class="c" style="left:1304.10px;top:475.64px;background:#151b23"></div><div class="c" style="left:1304.10px;top:489.82px;background:#151b23"></div><div class="c" style="left:1304.10px;top:504.00px;background:#151b23"></div><div class="c" style="left:1304.10px;top:518.18px;background:#151b23"></div><div class="c" style="left:1318.35px;top:433.10px;background:#151b23"></div><div class="c" style="left:1318.35px;top:447.28px;background:#151b23"></div><div class="c" style="left:1318.35px;top:461.46px;background:#151b23"></div><div class="c" style="left:1318.35px;top:475.64px;background:#151b23"></div><div class="c" style="left:1318.35px;top:489.82px;background:#151b23"></div><div class="c" style="left:1318.35px;top:504.00px;background:#151b23"></div><div class="c" style="left:1318.35px;top:518.18px;background:#151b23"></div><div class="c" style="left:1332.60px;top:433.10px;background:#151b23"></div><div class="c" style="left:1332.60px;top:447.28px;background:#151b23"></div><div class="c" style="left:1332.60px;top:461.46px;background:#151b23"></div><div class="c" style="left:1332.60px;top:475.64px;background:#151b23"></div><div class="c" style="left:1332.60px;top:489.82px;background:#151b23"></div><div class="c" style="left:1332.60px;top:504.00px;background:#151b23"></div><div class="c" style="left:1332.60px;top:518.18px;background:#151b23"></div><div class="c" style="left:1346.85px;top:433.10px;background:#151b23"></div><div class="c" style="left:1346.85px;top:447.28px;background:#151b23"></div><div class="c" style="left:1346.85px;top:461.46px;background:#151b23"></div><div class="c" style="left:1346.85px;top:475.64px;background:#151b23"></div><div class="c" style="left:1346.85px;top:489.82px;background:#151b23"></div><div class="c" style="left:1346.85px;top:504.00px;background:#151b23"></div><div class="c" style="left:1346.85px;top:518.18px;background:#151b23"></div><div class="c" style="left:1361.10px;top:433.10px;background:#151b23"></div><div class="c" style="left:1361.10px;top:447.28px;background:#151b23"></div><div class="c" style="left:1361.10px;top:461.46px;background:#151b23"></div><div class="c" style="left:1361.10px;top:475.64px;background:#151b23"></div><div class="c" style="left:1361.10px;top:489.82px;background:#151b23"></div><div class="c" style="left:1361.10px;top:504.00px;background:#151b23"></div><div class="c" style="left:1361.10px;top:518.18px;background:#151b23"></div><div class="c" style="left:1375.35px;top:433.10px;background:#151b23"></div><div class="c" style="left:1375.35px;top:447.28px;background:#151b23"></div><div class="c" style="left:1375.35px;top:461.46px;background:#151b23"></div><div class="c" style="left:1375.35px;top:475.64px;background:#151b23"></div><div class="c" style="left:1375.35px;top:489.82px;background:#151b23"></div><div class="c" style="left:1375.35px;top:504.00px;background:#151b23"></div><div class="c" style="left:1375.35px;top:518.18px;background:#151b23"></div><div class="c" style="left:1389.60px;top:433.10px;background:#151b23"></div><div class="c" style="left:1389.60px;top:447.28px;background:#151b23"></div><div class="c" style="left:1389.60px;top:461.46px;background:#151b23"></div><div class="c" style="left:1389.60px;top:475.64px;background:#151b23"></div><div class="c" style="left:1389.60px;top:489.82px;background:#151b23"></div><div class="c" style="left:1389.60px;top:504.00px;background:#151b23"></div><div class="c" style="left:1389.60px;top:518.18px;background:#151b23"></div><div class="c" style="left:1403.85px;top:433.10px;background:#151b23"></div><div class="c" style="left:1403.85px;top:447.28px;background:#151b23"></div><div class="c" style="left:1403.85px;top:461.46px;background:#151b23"></div><div class="c" style="left:1403.85px;top:475.64px;background:#151b23"></div><div class="c" style="left:1403.85px;top:489.82px;background:#151b23"></div><div class="c" style="left:1403.85px;top:504.00px;background:#151b23"></div><div class="c" style="left:1403.85px;top:518.18px;background:#151b23"></div><div class="c" style="left:1418.10px;top:433.10px;background:#151b23"></div><div class="c" style="left:1418.10px;top:447.28px;background:#151b23"></div><div class="c" style="left:1418.10px;top:461.46px;background:#151b23"></div>
<div class="t" id="learn" style="left:661.5px;top:541.57px;font-size:13.5px;line-height:13.5px;color:#9198a1;font-weight:400;transform:scaleX(1.01);transform-origin:0 0;">Learn how we count contributions</div>
<div class="t" id="less" style="left:1270px;top:541.57px;font-size:13.5px;line-height:13.5px;color:#9198a1;font-weight:400;transform:scaleX(0.86);transform-origin:0 0;">Less</div>
<div class="c" style="left:1299.2px;top:542px;background:#151b23"></div>
<div class="c" style="left:1315px;top:542px;background:#033a16"></div>
<div class="c" style="left:1330.1px;top:542px;background:#196c2e"></div>
<div class="c" style="left:1346px;top:542px;background:#2ea043"></div>
<div class="c" style="left:1362px;top:542px;background:#56d364"></div>
<div class="t" id="more" style="left:1378.5px;top:541.57px;font-size:13.5px;line-height:13.5px;color:#9198a1;font-weight:400;">More</div>
<div class="t" id="y2025" style="left:1509.5px;top:372.57px;font-size:13.5px;line-height:13.5px;color:#9198a1;font-weight:400;">2025</div>
<div class="a" style="left:1492px;top:406px;width:132px;height:38px;background:#1f6feb;border-radius:7px;"></div>
<div class="t" id="y2024" style="left:1509.5px;top:419.57px;font-size:13.5px;line-height:13.5px;color:#ffffff;font-weight:400;">2024</div>
<div class="t" id="act" style="left:615.5px;top:603.76px;font-size:18px;line-height:18px;color:#f0f6fc;font-weight:400;transform:scaleX(1.03);transform-origin:0 0;">Contribution activity</div>
<div class="t" id="dec" style="left:625px;top:652.57px;font-size:13.5px;line-height:13.5px;color:#f0f6fc;font-weight:700;transform:scaleX(0.965);transform-origin:0 0;">December 2024</div>
<div class="a" style="left:739px;top:659px;width:576px;height:1px;background:#3d444d;"></div>
<div class="t" id="noact" style="left:805.5px;top:700.67px;font-size:15.75px;line-height:15.75px;color:#9198a1;font-weight:400;transform:scaleX(1.017);transform-origin:0 0;">mokuri9518 had no activity during this period.</div>
<div class="a" style="left:616px;top:746px;width:840px;height:43px;border:1px solid #3d444d;border-radius:7px;"></div>
<div class="t" id="showmore" style="left:977px;top:761.57px;font-size:13.5px;line-height:13.5px;color:#4493f8;font-weight:700;transform:scaleX(0.951);transform-origin:0 0;">Show more activity</div>
<div class="a" style="left:1890px;top:0px;width:11px;height:821px;background:#2c2c2c;"></div>
<div class="a" style="left:1894px;top:17px;width:12px;height:804px;background:#a3a3a3;border-radius:5px;"></div>
<svg class="a" style="left:1890px;top:0px" width="11" height="10" viewBox="0 0 11 10"><path d="M3 9.3 L10 -0.5 L17 9.3 Z" fill="#a3a3a3"/></svg>
</body></html>
